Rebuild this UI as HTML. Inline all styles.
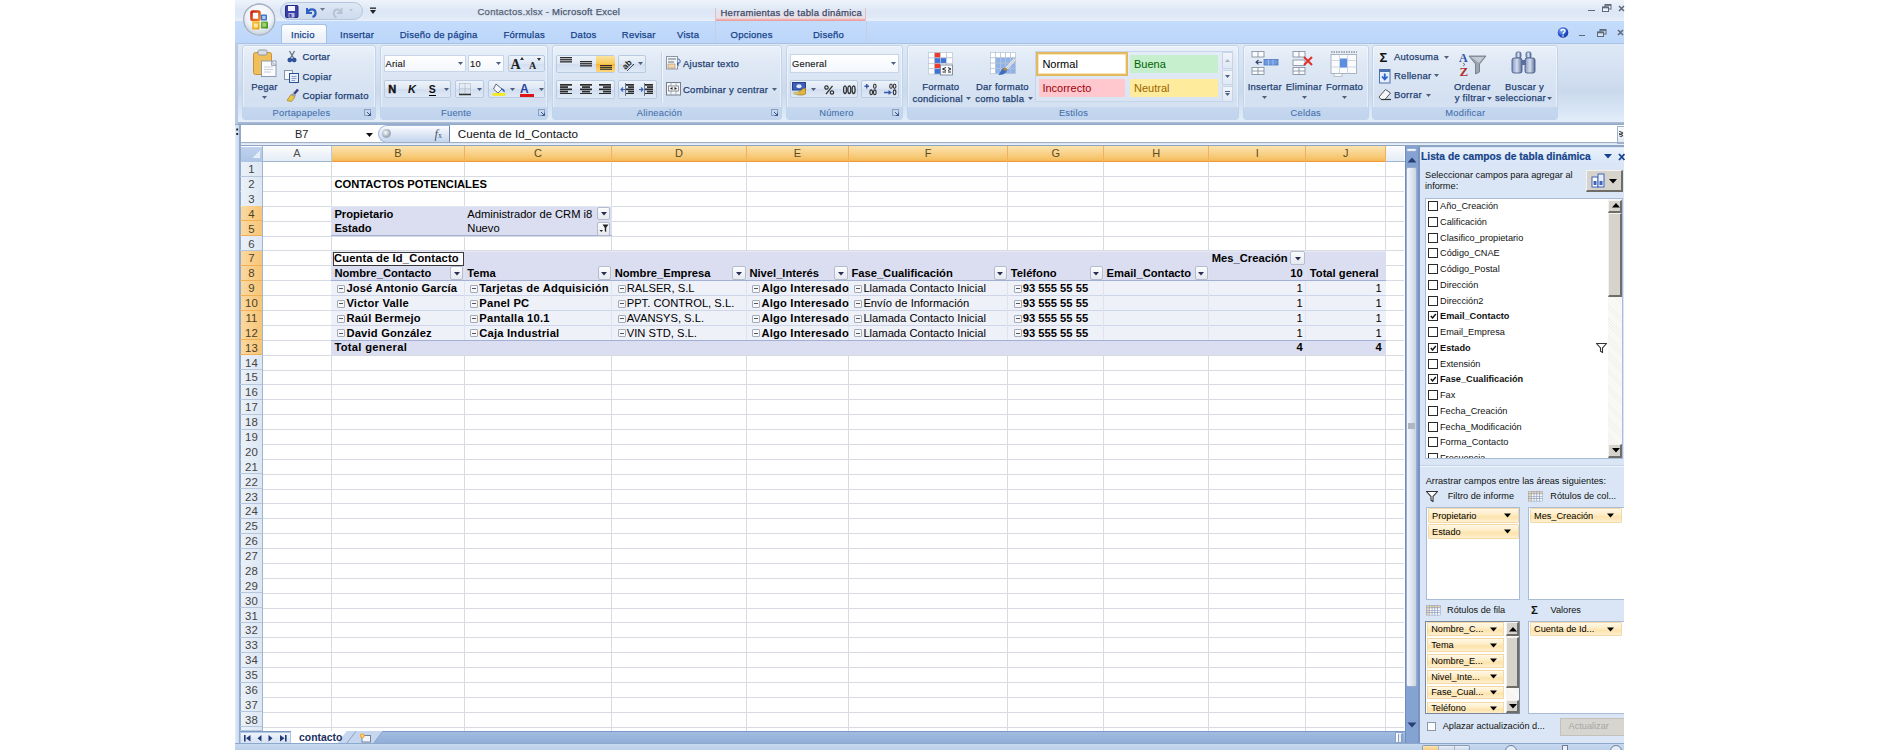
<!DOCTYPE html>
<html><head><meta charset="utf-8"><style>
html,body{margin:0;padding:0;width:1900px;height:750px;overflow:hidden;background:#fff;font-family:"Liberation Sans",sans-serif;}
#root{position:relative;width:1900px;height:750px;overflow:hidden;}
</style></head><body><div id="root">
<div style="position:absolute;left:235px;top:0px;width:1389px;height:750px;background:#c5d7ee"></div>
<div style="position:absolute;left:235px;top:0px;width:1389px;height:21px;background:linear-gradient(#eef3fb 0%,#e8eff9 20%,#dde7f6 50%,#dfe8f6 78%,#e9f0fb 100%)"></div>
<div style="position:absolute;left:280px;top:2px;width:83px;height:18px;background:linear-gradient(#dfe8f5,#cddbee);border:1px solid #b6c7de;border-radius:9px;box-sizing:border-box"></div>
<svg style="position:absolute;left:285px;top:5px;" width="14" height="13" viewBox="0 0 14 13"><rect x="0.5" y="0.5" width="12.5" height="12" rx="1" fill="#3b3fa8" stroke="#272b80"/><rect x="3" y="1" width="7" height="5" fill="#f4f6fc"/><rect x="3.5" y="8" width="6" height="4.5" fill="#b8bde0"/><rect x="4.5" y="9" width="2" height="3" fill="#3b3fa8"/></svg>
<svg style="position:absolute;left:304px;top:4px;" width="14" height="14" viewBox="0 0 14 14"><path d="M3 4 L3 9 L8 9" fill="none" stroke="#2f5fc0" stroke-width="2"/><path d="M3.5 8.5 C5 4.5, 11 4, 11.5 8.5 C11.8 11, 10 12.5, 8.5 13" fill="none" stroke="#2f5fc0" stroke-width="2.2"/></svg>
<svg style="position:absolute;left:320px;top:8px;" width="6" height="4" viewBox="0 0 6 4"><path d="M0 0 L5 0 L2.5 3 Z" fill="#6c7a8e"/></svg>
<svg style="position:absolute;left:332px;top:5px;" width="13" height="13" viewBox="0 0 13 13"><path d="M9.5 3 L9.5 8 L5 8" fill="none" stroke="#b7c2d2" stroke-width="1.8"/><path d="M9 7.5 C7.5 3.5, 2 3.5, 1.8 8 C1.6 10.5, 3 12, 4.5 12.5" fill="none" stroke="#b7c2d2" stroke-width="2"/></svg>
<svg style="position:absolute;left:349px;top:9px;" width="5" height="3" viewBox="0 0 5 3"><path d="M0 0 L4 0 L2 2.5 Z" fill="#b7c2d2"/></svg>
<svg style="position:absolute;left:369px;top:7px;" width="8" height="8" viewBox="0 0 8 8"><rect x="1" y="0.5" width="6" height="1.3" fill="#222"/><path d="M1 3 L7 3 L4 7 Z" fill="#222"/></svg>
<div style="position:absolute;top:7.46px;font-size:9.5px;line-height:9.5px;color:#5a6474;font-weight:normal;white-space:nowrap;letter-spacing:0.25px;-webkit-text-stroke:0.25px #5a6474;left:477.5px;">Contactos.xlsx - <span style="color:#3e4e66">Microsoft Excel</span></div>
<div style="position:absolute;left:715px;top:8px;width:151px;height:13.5px;background:linear-gradient(rgba(255,255,255,0) 0%,rgba(248,214,214,0.5) 70%,#f1a4a4 86%,#e88585 100%);border-left:1px solid #d9c2c8;border-right:1px solid #d9c2c8;box-sizing:border-box"></div>
<div style="position:absolute;top:7.76px;font-size:9.5px;line-height:9.5px;color:#3b4a66;font-weight:normal;white-space:nowrap;letter-spacing:0.25px;-webkit-text-stroke:0.25px #3b4a66;left:720.5px;">Herramientas de tabla dinámica</div>
<div style="position:absolute;left:1588px;top:9.5px;width:7px;height:1.5px;background:#5d6878"></div>
<svg style="position:absolute;left:1602px;top:4px;" width="10" height="8" viewBox="0 0 10 8"><rect x="3" y="0.5" width="6" height="4.5" fill="none" stroke="#5d6878" stroke-width="1"/><path d="M3 1 H9" stroke="#5d6878" stroke-width="1.6"/><rect x="0.5" y="3" width="6" height="4.5" fill="#eef3fb" stroke="#5d6878" stroke-width="1"/><path d="M0.5 3.5 H6.5" stroke="#5d6878" stroke-width="1.6"/></svg>
<svg style="position:absolute;left:1617.5px;top:4.5px;" width="7" height="7" viewBox="0 0 7 7"><path d="M1 1 L6 6 M6 1 L1 6" stroke="#5d6878" stroke-width="1.5"/></svg>
<div style="position:absolute;left:235px;top:21px;width:1389px;height:22px;background:linear-gradient(#c4dcfb,#bcd6fa)"></div>
<div style="position:absolute;left:715px;top:21px;width:1px;height:22px;background:#c6cfe0"></div>
<div style="position:absolute;left:865.5px;top:21px;width:1px;height:22px;background:#c6cfe0"></div>
<div style="position:absolute;left:281px;top:24px;width:46px;height:20px;background:linear-gradient(#ffffff,#f0f5fb 50%,#e8eff9);border:1px solid #a5c0e3;border-bottom:none;border-radius:3px 3px 0 0;box-sizing:border-box"></div>
<div style="position:absolute;top:29.66px;font-size:9.5px;line-height:9.5px;color:#15428b;font-weight:normal;white-space:nowrap;letter-spacing:0.25px;-webkit-text-stroke:0.25px #15428b;left:291px;">Inicio</div>
<div style="position:absolute;top:29.66px;font-size:9.5px;line-height:9.5px;color:#15428b;font-weight:normal;white-space:nowrap;letter-spacing:0.25px;-webkit-text-stroke:0.25px #15428b;left:340px;">Insertar</div>
<div style="position:absolute;top:29.66px;font-size:9.5px;line-height:9.5px;color:#15428b;font-weight:normal;white-space:nowrap;letter-spacing:0.25px;-webkit-text-stroke:0.25px #15428b;left:399.7px;">Diseño de página</div>
<div style="position:absolute;top:29.66px;font-size:9.5px;line-height:9.5px;color:#15428b;font-weight:normal;white-space:nowrap;letter-spacing:0.25px;-webkit-text-stroke:0.25px #15428b;left:503.4px;">Fórmulas</div>
<div style="position:absolute;top:29.66px;font-size:9.5px;line-height:9.5px;color:#15428b;font-weight:normal;white-space:nowrap;letter-spacing:0.25px;-webkit-text-stroke:0.25px #15428b;left:570.5px;">Datos</div>
<div style="position:absolute;top:29.66px;font-size:9.5px;line-height:9.5px;color:#15428b;font-weight:normal;white-space:nowrap;letter-spacing:0.25px;-webkit-text-stroke:0.25px #15428b;left:621.8px;">Revisar</div>
<div style="position:absolute;top:29.66px;font-size:9.5px;line-height:9.5px;color:#15428b;font-weight:normal;white-space:nowrap;letter-spacing:0.25px;-webkit-text-stroke:0.25px #15428b;left:677px;">Vista</div>
<div style="position:absolute;top:29.66px;font-size:9.5px;line-height:9.5px;color:#15428b;font-weight:normal;white-space:nowrap;letter-spacing:0.25px;-webkit-text-stroke:0.25px #15428b;left:730.5px;">Opciones</div>
<div style="position:absolute;top:29.66px;font-size:9.5px;line-height:9.5px;color:#15428b;font-weight:normal;white-space:nowrap;letter-spacing:0.25px;-webkit-text-stroke:0.25px #15428b;left:813px;">Diseño</div>
<svg style="position:absolute;left:1556px;top:26px" width="14" height="14" viewBox="0 0 14 14">
<defs><radialGradient id="hg" cx="40%" cy="35%" r="70%"><stop offset="0" stop-color="#8fb8f8"/><stop offset="0.6" stop-color="#2050c8"/><stop offset="1" stop-color="#10309a"/></radialGradient></defs>
<circle cx="7" cy="6.5" r="5.8" fill="url(#hg)" stroke="#e6eefc" stroke-width="0.8"/>
<path d="M5 5 C5 3, 9 3, 9 5 C9 6.5, 7 6.5, 7 8.2" fill="none" stroke="#fff" stroke-width="1.4"/><circle cx="7" cy="10" r="0.8" fill="#fff"/></svg>
<div style="position:absolute;left:1578.5px;top:34.5px;width:6.5px;height:1.5px;background:#5d6878"></div>
<svg style="position:absolute;left:1596.5px;top:28.5px;" width="10" height="8" viewBox="0 0 10 8"><rect x="3" y="0.5" width="6" height="4.5" fill="none" stroke="#5d6878" stroke-width="1"/><path d="M3 1 H9" stroke="#5d6878" stroke-width="1.6"/><rect x="0.5" y="3" width="6" height="4.5" fill="#d5e4f8" stroke="#5d6878" stroke-width="1"/><path d="M0.5 3.5 H6.5" stroke="#5d6878" stroke-width="1.6"/></svg>
<svg style="position:absolute;left:1617px;top:29px;" width="7" height="7" viewBox="0 0 7 7"><path d="M1 1 L6 6 M6 1 L1 6" stroke="#5d6878" stroke-width="1.5"/></svg>
<svg style="position:absolute;left:241px;top:2px" width="37" height="37" viewBox="0 0 37 37">
<defs><radialGradient id="ob" cx="50%" cy="35%" r="65%"><stop offset="0" stop-color="#ffffff"/><stop offset="0.65" stop-color="#eef2f8"/><stop offset="1" stop-color="#c3cfdd"/></radialGradient>
<linearGradient id="rq" x1="0" y1="0" x2="1" y2="1"><stop offset="0" stop-color="#c81e14"/><stop offset="1" stop-color="#f2861c"/></linearGradient>
<linearGradient id="yq" x1="0" y1="0" x2="1" y2="1"><stop offset="0" stop-color="#f7c73a"/><stop offset="1" stop-color="#ee9a12"/></linearGradient>
<linearGradient id="gq" x1="0" y1="0" x2="1" y2="1"><stop offset="0" stop-color="#7cc046"/><stop offset="1" stop-color="#3f8a1e"/></linearGradient></defs>
<circle cx="18.2" cy="17.6" r="16.6" fill="#dfe8f4" opacity="0.6"/>
<circle cx="18.2" cy="17.6" r="15.6" fill="url(#ob)" stroke="#a3afbf" stroke-width="1.3"/>
<rect x="10.5" y="9.5" width="8" height="8.5" rx="1.2" fill="none" stroke="url(#rq)" stroke-width="2.6"/>
<rect x="19.8" y="12.5" width="6.2" height="6" rx="0.8" fill="#3a72cc"/>
<rect x="21.2" y="13.9" width="3.4" height="3.2" fill="#a9cdf5"/>
<rect x="11" y="19.5" width="7.5" height="8" rx="0.8" fill="url(#yq)"/>
<rect x="12.8" y="21.5" width="4" height="4" fill="#fbe7a6"/>
<rect x="19.8" y="19.5" width="7.2" height="7" rx="0.8" fill="url(#gq)"/>
<rect x="21.5" y="21.2" width="3.8" height="3.6" fill="#bfe39b" opacity="0.7"/>
</svg>
<div style="position:absolute;left:235px;top:43px;width:1389px;height:81px;background:linear-gradient(#dfe9f6 0%,#d6e2f3 30%,#cbd9ed 60%,#d9e6f6 85%,#e7f0fb 100%)"></div>
<div style="position:absolute;left:235px;top:43px;width:1389px;height:1px;background:#a9c2e4"></div>
<div style="position:absolute;left:235px;top:121.5px;width:1389px;height:3px;background:linear-gradient(#aebfd6,#8ea6c6)"></div>
<div style="position:absolute;left:235px;top:43px;width:3px;height:81px;background:#b9cbe3"></div>
<div style="position:absolute;left:241.8px;top:45px;width:134.2px;height:74.5px;border-radius:3px;border:1px solid #c2d4ea;box-sizing:border-box;background:linear-gradient(#eaf1fa 0%,#e0e9f5 20%,#d3e0f1 75%,#d9e5f4 100%);box-shadow:inset 0 0 0 1px rgba(255,255,255,0.45)"></div>
<div style="position:absolute;left:242.8px;top:106.5px;width:132.2px;height:12px;background:linear-gradient(#c6d8ef,#c0d4ee);border-radius:0 0 2px 2px"></div>
<div style="position:absolute;top:109.02px;font-size:9.31px;line-height:9.31px;color:#4571ad;font-weight:normal;white-space:nowrap;letter-spacing:0.25px;-webkit-text-stroke:0.1px #4571ad;left:101.5px;width:400px;text-align:center;">Portapapeles</div>
<svg style="position:absolute;left:364px;top:109px;" width="8" height="8" viewBox="0 0 8 8"><rect x="0.5" y="0.5" width="6" height="6" fill="none" stroke="#7d94b6" stroke-width="0.8"/><path d="M3 3 L6.5 6.5 M6.5 3.8 L6.5 6.5 L3.8 6.5" stroke="#3d5a8a" stroke-width="1" fill="none"/></svg>
<svg style="position:absolute;left:252px;top:49px;" width="26" height="29" viewBox="0 0 26 29">
<rect x="1.5" y="3.5" width="18" height="22" rx="2" fill="#f0bf5a" stroke="#c8913a"/>
<rect x="6" y="1" width="9" height="5" rx="1.5" fill="#d9dde4" stroke="#8c96a6"/>
<rect x="9.5" y="12" width="14.5" height="15.5" fill="#fbfcfe" stroke="#8f9bb0"/>
<path d="M19.5 12 L24 16.5 L19.5 16.5 Z" fill="#d5dbe6" stroke="#8f9bb0" stroke-width="0.8"/>
<path d="M12 18 H21 M12 20.5 H21 M12 23 H19" stroke="#c2c9d6" stroke-width="0.9"/></svg>
<div style="position:absolute;top:81.76px;font-size:9.5px;line-height:9.5px;color:#233f72;font-weight:normal;white-space:nowrap;letter-spacing:0.25px;-webkit-text-stroke:0.25px #233f72;left:64.5px;width:400px;text-align:center;">Pegar</div>
<svg style="position:absolute;left:262px;top:95.5px;" width="5" height="3" viewBox="0 0 5 3"><path d="M0 0 L5 0 L2.5 3 Z" fill="#4d5f7c"/></svg>
<svg style="position:absolute;left:286px;top:50px;" width="12" height="13" viewBox="0 0 12 13"><path d="M3.5 1 L7.5 8 M8.5 1 L4.5 8" stroke="#6d7684" stroke-width="1.3"/><circle cx="3.8" cy="10" r="1.9" fill="#2c58b0" stroke="#17367a" stroke-width="0.8"/><circle cx="8.2" cy="10" r="1.9" fill="#2c58b0" stroke="#17367a" stroke-width="0.8"/></svg>
<div style="position:absolute;top:52.36px;font-size:9.5px;line-height:9.5px;color:#233f72;font-weight:normal;white-space:nowrap;letter-spacing:0.25px;-webkit-text-stroke:0.25px #233f72;left:302.4px;">Cortar</div>
<svg style="position:absolute;left:284px;top:70px;" width="16" height="13" viewBox="0 0 16 13"><rect x="0.5" y="0.5" width="8" height="9" fill="#f7f9fd" stroke="#8593ab"/><rect x="5.5" y="3.5" width="9" height="9" fill="#e9eef8" stroke="#2c4f9a"/><path d="M7.5 6.5 H12.5 M7.5 8.5 H12.5 M7.5 10.5 H11" stroke="#6d86c0" stroke-width="0.8"/></svg>
<div style="position:absolute;top:72.16px;font-size:9.5px;line-height:9.5px;color:#233f72;font-weight:normal;white-space:nowrap;letter-spacing:0.25px;-webkit-text-stroke:0.25px #233f72;left:302.4px;">Copiar</div>
<svg style="position:absolute;left:285px;top:88px;" width="15" height="14" viewBox="0 0 15 14"><path d="M9 6 L13 1.5" stroke="#3b3f7a" stroke-width="2.5"/><path d="M2 12.5 L6 6.5 L10 9 L6.5 13.5 Z" fill="#e8c64a" stroke="#a8892a" stroke-width="0.8"/><path d="M6 6.5 L8.5 4.8 L11 7 L10 9 Z" fill="#9aa0b0"/></svg>
<div style="position:absolute;top:90.96px;font-size:9.5px;line-height:9.5px;color:#233f72;font-weight:normal;white-space:nowrap;letter-spacing:0.25px;-webkit-text-stroke:0.25px #233f72;left:302.4px;">Copiar formato</div>
<div style="position:absolute;left:379.5px;top:45px;width:168.9px;height:74.5px;border-radius:3px;border:1px solid #c2d4ea;box-sizing:border-box;background:linear-gradient(#eaf1fa 0%,#e0e9f5 20%,#d3e0f1 75%,#d9e5f4 100%);box-shadow:inset 0 0 0 1px rgba(255,255,255,0.45)"></div>
<div style="position:absolute;left:380.5px;top:106.5px;width:166.9px;height:12px;background:linear-gradient(#c6d8ef,#c0d4ee);border-radius:0 0 2px 2px"></div>
<div style="position:absolute;top:109.02px;font-size:9.31px;line-height:9.31px;color:#4571ad;font-weight:normal;white-space:nowrap;letter-spacing:0.25px;-webkit-text-stroke:0.1px #4571ad;left:256.3px;width:400px;text-align:center;">Fuente</div>
<svg style="position:absolute;left:538px;top:109px;" width="8" height="8" viewBox="0 0 8 8"><rect x="0.5" y="0.5" width="6" height="6" fill="none" stroke="#7d94b6" stroke-width="0.8"/><path d="M3 3 L6.5 6.5 M6.5 3.8 L6.5 6.5 L3.8 6.5" stroke="#3d5a8a" stroke-width="1" fill="none"/></svg>
<div style="position:absolute;left:383.5px;top:54.7px;width:82.5px;height:17.8px;background:linear-gradient(#ffffff,#f3f7fc);border:1px solid #c6d5e8;box-sizing:border-box"></div>
<div style="position:absolute;top:59.52px;font-size:9.31px;line-height:9.31px;color:#1a1a1a;font-weight:normal;white-space:nowrap;letter-spacing:0.25px;-webkit-text-stroke:0.15px #1a1a1a;left:385.5px;">Arial</div>
<svg style="position:absolute;left:458px;top:62px;" width="5" height="3" viewBox="0 0 5 3"><path d="M0 0 L5 0 L2.5 3 Z" fill="#4d5f7c"/></svg>
<div style="position:absolute;left:467.5px;top:54.7px;width:36.5px;height:17.8px;background:linear-gradient(#ffffff,#f3f7fc);border:1px solid #c6d5e8;box-sizing:border-box"></div>
<div style="position:absolute;top:59.52px;font-size:9.31px;line-height:9.31px;color:#1a1a1a;font-weight:normal;white-space:nowrap;letter-spacing:0.25px;-webkit-text-stroke:0.15px #1a1a1a;left:470px;">10</div>
<svg style="position:absolute;left:496px;top:62px;" width="5" height="3" viewBox="0 0 5 3"><path d="M0 0 L5 0 L2.5 3 Z" fill="#4d5f7c"/></svg>
<div style="position:absolute;left:507.6px;top:54.7px;width:37.4px;height:17.8px;border:1px solid #b9cbe3;border-radius:2px;box-sizing:border-box;background:linear-gradient(#eef3fa,#dde7f4 50%,#d2def0 51%,#dfe9f6);"></div>
<div style="position:absolute;top:57.65px;font-size:14px;line-height:14px;color:#222;font-weight:bold;white-space:nowrap;font-family:'Liberation Serif',serif;left:510.5px;">A</div>
<svg style="position:absolute;left:520px;top:56.5px;" width="4" height="3" viewBox="0 0 4 3"><path d="M0 3 L4 3 L2 0 Z" fill="#333"/></svg>
<div style="position:absolute;top:60.53px;font-size:10px;line-height:10px;color:#222;font-weight:bold;white-space:nowrap;font-family:'Liberation Serif',serif;left:529px;">A</div>
<svg style="position:absolute;left:537px;top:57.5px;" width="4" height="3" viewBox="0 0 4 3"><path d="M0 0 L4 0 L2 3 Z" fill="#333"/></svg>
<div style="position:absolute;left:383.5px;top:79.7px;width:67.5px;height:18.7px;border:1px solid #b9cbe3;border-radius:2px;box-sizing:border-box;background:linear-gradient(#eef3fa,#dde7f4 50%,#d2def0 51%,#dfe9f6);"></div>
<div style="position:absolute;top:83.99px;font-size:11px;line-height:11px;color:#111;font-weight:bold;white-space:nowrap;-webkit-text-stroke:0.4px #111;left:388.3px;">N</div>
<div style="position:absolute;top:83.99px;font-size:11px;line-height:11px;color:#111;font-weight:bold;white-space:nowrap;font-style:italic;left:408px;">K</div>
<div style="position:absolute;top:84.11px;font-size:10.5px;line-height:10.5px;color:#111;font-weight:bold;white-space:nowrap;left:428.8px;">S</div>
<div style="position:absolute;left:428.5px;top:95px;width:7.5px;height:1px;background:#000"></div>
<svg style="position:absolute;left:444px;top:87.5px;" width="5" height="3" viewBox="0 0 5 3"><path d="M0 0 L5 0 L2.5 3 Z" fill="#4d5f7c"/></svg>
<div style="position:absolute;left:455px;top:79.7px;width:29.4px;height:18.7px;border:1px solid #b9cbe3;border-radius:2px;box-sizing:border-box;background:linear-gradient(#eef3fa,#dde7f4 50%,#d2def0 51%,#dfe9f6);"></div>
<svg style="position:absolute;left:459px;top:83px;" width="13" height="13" viewBox="0 0 13 13"><rect x="0.5" y="0.5" width="11" height="10.5" fill="none" stroke="#a3acb8" stroke-dasharray="1 1"/><path d="M6 0.5 V11 M0.5 5.75 H11.5" stroke="#a3acb8" stroke-dasharray="1 1"/><path d="M0 11.5 H12" stroke="#333" stroke-width="1.5"/></svg>
<svg style="position:absolute;left:477px;top:87.5px;" width="5" height="3" viewBox="0 0 5 3"><path d="M0 0 L5 0 L2.5 3 Z" fill="#4d5f7c"/></svg>
<div style="position:absolute;left:488.4px;top:79.7px;width:56.6px;height:18.7px;border:1px solid #b9cbe3;border-radius:2px;box-sizing:border-box;background:linear-gradient(#eef3fa,#dde7f4 50%,#d2def0 51%,#dfe9f6);"></div>
<svg style="position:absolute;left:491.5px;top:82px;" width="15" height="14" viewBox="0 0 15 14"><path d="M4 2 L10 7 L6 11 L1.5 7 Z" fill="#f4f6fa" stroke="#555d6a" stroke-width="0.9"/><path d="M9 7 C11 7, 12.5 9, 12 10" stroke="#3460b8" stroke-width="1.5" fill="none"/><rect x="0.5" y="11" width="13" height="2.8" fill="#f3ea1d"/></svg>
<svg style="position:absolute;left:510px;top:87.5px;" width="5" height="3" viewBox="0 0 5 3"><path d="M0 0 L5 0 L2.5 3 Z" fill="#4d5f7c"/></svg>
<div style="position:absolute;top:82.84px;font-size:12px;line-height:12px;color:#2a3f9e;font-weight:bold;white-space:nowrap;left:520px;">A</div>
<div style="position:absolute;left:519.5px;top:93.5px;width:14px;height:3px;background:#e01414"></div>
<svg style="position:absolute;left:538.5px;top:87.5px;" width="5" height="3" viewBox="0 0 5 3"><path d="M0 0 L5 0 L2.5 3 Z" fill="#4d5f7c"/></svg>
<div style="position:absolute;left:552.2px;top:45px;width:230.3px;height:74.5px;border-radius:3px;border:1px solid #c2d4ea;box-sizing:border-box;background:linear-gradient(#eaf1fa 0%,#e0e9f5 20%,#d3e0f1 75%,#d9e5f4 100%);box-shadow:inset 0 0 0 1px rgba(255,255,255,0.45)"></div>
<div style="position:absolute;left:553.2px;top:106.5px;width:228.3px;height:12px;background:linear-gradient(#c6d8ef,#c0d4ee);border-radius:0 0 2px 2px"></div>
<div style="position:absolute;top:109.02px;font-size:9.31px;line-height:9.31px;color:#4571ad;font-weight:normal;white-space:nowrap;letter-spacing:0.25px;-webkit-text-stroke:0.1px #4571ad;left:459.5px;width:400px;text-align:center;">Alineación</div>
<svg style="position:absolute;left:771px;top:109px;" width="8" height="8" viewBox="0 0 8 8"><rect x="0.5" y="0.5" width="6" height="6" fill="none" stroke="#7d94b6" stroke-width="0.8"/><path d="M3 3 L6.5 6.5 M6.5 3.8 L6.5 6.5 L3.8 6.5" stroke="#3d5a8a" stroke-width="1" fill="none"/></svg>
<div style="position:absolute;left:555.5px;top:54.5px;width:59.9px;height:18.4px;border:1px solid #b9cbe3;border-radius:2px;box-sizing:border-box;background:linear-gradient(#eef3fa,#dde7f4 50%,#d2def0 51%,#dfe9f6);"></div>
<div style="position:absolute;left:596px;top:55.5px;width:18.5px;height:16.5px;background:linear-gradient(#fbe39e,#f9c958 50%,#f7b536 51%,#fbd97e);border-radius:1px"></div>
<svg style="position:absolute;left:559.5px;top:57px;" width="12" height="5.5" viewBox="0 0 12 5.5"><rect x="0.0" y="0.0" width="12" height="1.3" fill="#2b2b2b"/><rect x="0.0" y="2.1" width="12" height="1.3" fill="#2b2b2b"/><rect x="0.0" y="4.2" width="12" height="1.3" fill="#2b2b2b"/></svg>
<svg style="position:absolute;left:579.5px;top:61px;" width="12" height="5.5" viewBox="0 0 12 5.5"><rect x="0.0" y="0.0" width="12" height="1.3" fill="#2b2b2b"/><rect x="0.0" y="2.1" width="12" height="1.3" fill="#2b2b2b"/><rect x="0.0" y="4.2" width="12" height="1.3" fill="#2b2b2b"/></svg>
<svg style="position:absolute;left:599.5px;top:64.5px;" width="12" height="5.5" viewBox="0 0 12 5.5"><rect x="0.0" y="0.0" width="12" height="1.3" fill="#2b2b2b"/><rect x="0.0" y="2.1" width="12" height="1.3" fill="#2b2b2b"/><rect x="0.0" y="4.2" width="12" height="1.3" fill="#2b2b2b"/></svg>
<div style="position:absolute;left:618px;top:54.5px;width:27.7px;height:18.4px;border:1px solid #b9cbe3;border-radius:2px;box-sizing:border-box;background:linear-gradient(#eef3fa,#dde7f4 50%,#d2def0 51%,#dfe9f6);"></div>
<svg style="position:absolute;left:621px;top:56.5px;" width="17" height="15" viewBox="0 0 17 15"><text x="0" y="0" transform="translate(4.5 13) rotate(-45)" font-family="Liberation Sans" font-weight="bold" font-size="8.5" fill="#222">ab</text><path d="M6 14 L13 7" stroke="#333" stroke-width="0.9"/><path d="M13 7 L11.5 7.3 L12.7 8.5 Z" fill="#333"/></svg>
<svg style="position:absolute;left:638px;top:61.5px;" width="5" height="3" viewBox="0 0 5 3"><path d="M0 0 L5 0 L2.5 3 Z" fill="#4d5f7c"/></svg>
<div style="position:absolute;left:555.5px;top:79.5px;width:59.9px;height:19px;border:1px solid #b9cbe3;border-radius:2px;box-sizing:border-box;background:linear-gradient(#eef3fa,#dde7f4 50%,#d2def0 51%,#dfe9f6);"></div>
<svg style="position:absolute;left:560px;top:83.8px;" width="12" height="10.7" viewBox="0 0 12 10.7"><rect x="0" y="0.0" width="12" height="1.7" fill="#2b2b2b"/><rect x="0" y="2.25" width="8" height="1.7" fill="#2b2b2b"/><rect x="0" y="4.5" width="12" height="1.7" fill="#2b2b2b"/><rect x="0" y="6.75" width="8" height="1.7" fill="#2b2b2b"/><rect x="0" y="9.0" width="12" height="1.7" fill="#2b2b2b"/></svg>
<svg style="position:absolute;left:579.5px;top:83.8px;" width="12" height="10.7" viewBox="0 0 12 10.7"><rect x="0.0" y="0.0" width="12" height="1.7" fill="#2b2b2b"/><rect x="2.0" y="2.25" width="8" height="1.7" fill="#2b2b2b"/><rect x="0.0" y="4.5" width="12" height="1.7" fill="#2b2b2b"/><rect x="2.0" y="6.75" width="8" height="1.7" fill="#2b2b2b"/><rect x="0.0" y="9.0" width="12" height="1.7" fill="#2b2b2b"/></svg>
<svg style="position:absolute;left:599px;top:83.8px;" width="12" height="10.7" viewBox="0 0 12 10.7"><rect x="0" y="0.0" width="12" height="1.7" fill="#2b2b2b"/><rect x="4" y="2.25" width="8" height="1.7" fill="#2b2b2b"/><rect x="0" y="4.5" width="12" height="1.7" fill="#2b2b2b"/><rect x="4" y="6.75" width="8" height="1.7" fill="#2b2b2b"/><rect x="0" y="9.0" width="12" height="1.7" fill="#2b2b2b"/></svg>
<div style="position:absolute;left:618px;top:79.5px;width:39px;height:19px;border:1px solid #b9cbe3;border-radius:2px;box-sizing:border-box;background:linear-gradient(#eef3fa,#dde7f4 50%,#d2def0 51%,#dfe9f6);"></div>
<svg style="position:absolute;left:626px;top:83.8px;" width="8" height="10.7" viewBox="0 0 8 10.7"><rect x="0" y="0.0" width="8" height="1.7" fill="#2b2b2b"/><rect x="2" y="2.25" width="6" height="1.7" fill="#2b2b2b"/><rect x="0" y="4.5" width="8" height="1.7" fill="#2b2b2b"/><rect x="2" y="6.75" width="6" height="1.7" fill="#2b2b2b"/><rect x="0" y="9.0" width="8" height="1.7" fill="#2b2b2b"/></svg>
<div style="position:absolute;left:625px;top:83px;width:0.8px;height:13px;background:#6d7a90"></div>
<svg style="position:absolute;left:619.5px;top:87px;" width="5" height="5" viewBox="0 0 5 5"><path d="M5 2.5 H1 M3 0.5 L1 2.5 L3 4.5" stroke="#3a62b8" stroke-width="1.1" fill="none"/></svg>
<svg style="position:absolute;left:645px;top:83.8px;" width="8" height="10.7" viewBox="0 0 8 10.7"><rect x="0" y="0.0" width="8" height="1.7" fill="#2b2b2b"/><rect x="2" y="2.25" width="6" height="1.7" fill="#2b2b2b"/><rect x="0" y="4.5" width="8" height="1.7" fill="#2b2b2b"/><rect x="2" y="6.75" width="6" height="1.7" fill="#2b2b2b"/><rect x="0" y="9.0" width="8" height="1.7" fill="#2b2b2b"/></svg>
<div style="position:absolute;left:644px;top:83px;width:0.8px;height:13px;background:#6d7a90"></div>
<svg style="position:absolute;left:638.5px;top:87px;" width="5" height="5" viewBox="0 0 5 5"><path d="M0 2.5 H4 M2 0.5 L4 2.5 L2 4.5" stroke="#3a62b8" stroke-width="1.1" fill="none"/></svg>
<div style="position:absolute;left:660.5px;top:52px;width:1px;height:51px;background:#c4d3e7"></div>
<div style="position:absolute;left:661.5px;top:52px;width:1px;height:51px;background:#f3f7fc"></div>
<svg style="position:absolute;left:665.5px;top:56px;" width="16" height="14" viewBox="0 0 16 14"><rect x="0.5" y="0.5" width="11" height="12.5" fill="#f4f6fa" stroke="#8b95a5"/><path d="M2 3 H10 M2 6 H8" stroke="#66707e" stroke-width="1"/><rect x="2" y="8" width="7" height="4" fill="#f0d8b0" stroke="#b4875a" stroke-width="0.6"/><path d="M12 3 C15 3, 15 8, 11 8 L13 6.5 M11 8 L13 9.5" stroke="#2a58b0" stroke-width="1" fill="none"/></svg>
<div style="position:absolute;top:58.96px;font-size:9.5px;line-height:9.5px;color:#233f72;font-weight:normal;white-space:nowrap;letter-spacing:0.25px;-webkit-text-stroke:0.25px #233f72;left:683px;">Ajustar texto</div>
<svg style="position:absolute;left:665.5px;top:82px;" width="16" height="14" viewBox="0 0 16 14"><rect x="0.5" y="0.5" width="14" height="12.5" fill="#f4f6fa" stroke="#747e8e"/><path d="M5 0.5 V13 M10 0.5 V13" stroke="#9aa3b2" stroke-width="0.8"/><rect x="2.5" y="4" width="10" height="5" fill="#f0f3f8" stroke="#555" stroke-width="0.6"/><path d="M4 6.5 L6.5 5 V8 Z M11 6.5 L8.5 5 V8 Z" fill="#222"/></svg>
<div style="position:absolute;top:84.56px;font-size:9.5px;line-height:9.5px;color:#233f72;font-weight:normal;white-space:nowrap;letter-spacing:0.25px;-webkit-text-stroke:0.25px #233f72;left:683px;">Combinar y centrar</div>
<svg style="position:absolute;left:772px;top:87.5px;" width="5" height="3" viewBox="0 0 5 3"><path d="M0 0 L5 0 L2.5 3 Z" fill="#4d5f7c"/></svg>
<div style="position:absolute;left:786.2px;top:45px;width:117px;height:74.5px;border-radius:3px;border:1px solid #c2d4ea;box-sizing:border-box;background:linear-gradient(#eaf1fa 0%,#e0e9f5 20%,#d3e0f1 75%,#d9e5f4 100%);box-shadow:inset 0 0 0 1px rgba(255,255,255,0.45)"></div>
<div style="position:absolute;left:787.2px;top:106.5px;width:115px;height:12px;background:linear-gradient(#c6d8ef,#c0d4ee);border-radius:0 0 2px 2px"></div>
<div style="position:absolute;top:109.02px;font-size:9.31px;line-height:9.31px;color:#4571ad;font-weight:normal;white-space:nowrap;letter-spacing:0.25px;-webkit-text-stroke:0.1px #4571ad;left:636.5px;width:400px;text-align:center;">Número</div>
<svg style="position:absolute;left:892px;top:109px;" width="8" height="8" viewBox="0 0 8 8"><rect x="0.5" y="0.5" width="6" height="6" fill="none" stroke="#7d94b6" stroke-width="0.8"/><path d="M3 3 L6.5 6.5 M6.5 3.8 L6.5 6.5 L3.8 6.5" stroke="#3d5a8a" stroke-width="1" fill="none"/></svg>
<div style="position:absolute;left:790.3px;top:54.4px;width:108.7px;height:18.4px;background:linear-gradient(#ffffff,#f3f7fc);border:1px solid #c6d5e8;box-sizing:border-box"></div>
<div style="position:absolute;top:59.72px;font-size:9.31px;line-height:9.31px;color:#1a1a1a;font-weight:normal;white-space:nowrap;letter-spacing:0.25px;-webkit-text-stroke:0.15px #1a1a1a;left:792px;">General</div>
<svg style="position:absolute;left:891px;top:62px;" width="5" height="3" viewBox="0 0 5 3"><path d="M0 0 L5 0 L2.5 3 Z" fill="#4d5f7c"/></svg>
<div style="position:absolute;left:790.3px;top:79.7px;width:67.7px;height:18.5px;border:1px solid #b9cbe3;border-radius:2px;box-sizing:border-box;background:linear-gradient(#eef3fa,#dde7f4 50%,#d2def0 51%,#dfe9f6);"></div>
<svg style="position:absolute;left:792px;top:82px;" width="15" height="14" viewBox="0 0 15 14"><rect x="0.5" y="0.5" width="13" height="7.5" fill="#3f5fb8" stroke="#24408a"/><ellipse cx="7" cy="4.2" rx="2.6" ry="2" fill="#dfe8f8"/><path d="M13.5 6 L13.5 12 C11 13.5, 6 13.5, 2 11.5 C5 10.5, 9 9.5, 10.5 7 Z" fill="#e2b53f" stroke="#9c7a22" stroke-width="0.7"/><ellipse cx="4" cy="11" rx="3" ry="1.6" fill="#c9c27a"/></svg>
<svg style="position:absolute;left:810.5px;top:87.5px;" width="5" height="3" viewBox="0 0 5 3"><path d="M0 0 L5 0 L2.5 3 Z" fill="#4d5f7c"/></svg>
<svg style="position:absolute;left:823.5px;top:84.5px;" width="11" height="10" viewBox="0 0 11 10"><circle cx="2.5" cy="2.5" r="1.7" fill="none" stroke="#333" stroke-width="1.2"/><circle cx="8" cy="7.5" r="1.7" fill="none" stroke="#333" stroke-width="1.2"/><path d="M8.5 0.8 L2 9.2" stroke="#333" stroke-width="1.3"/></svg>
<svg style="position:absolute;left:842.5px;top:84.5px;" width="13" height="10" viewBox="0 0 13 10"><ellipse cx="2" cy="4.7" rx="1.5" ry="3.8" fill="none" stroke="#333" stroke-width="1.3"/><ellipse cx="6.3" cy="4.7" rx="1.5" ry="3.8" fill="none" stroke="#333" stroke-width="1.3"/><ellipse cx="10.6" cy="4.7" rx="1.5" ry="3.8" fill="none" stroke="#333" stroke-width="1.3"/></svg>
<div style="position:absolute;left:861.4px;top:79.7px;width:37.6px;height:18.5px;border:1px solid #b9cbe3;border-radius:2px;box-sizing:border-box;background:linear-gradient(#eef3fa,#dde7f4 50%,#d2def0 51%,#dfe9f6);"></div>
<svg style="position:absolute;left:864px;top:82.5px;" width="15" height="13" viewBox="0 0 15 13"><path d="M0.5 3.3 H5 M2.75 1 V5.5" stroke="#3a58a8" stroke-width="1.5"/><ellipse cx="10.8" cy="3.2" rx="1.3" ry="2.2" fill="none" stroke="#333" stroke-width="1.1"/><ellipse cx="7.2" cy="9.3" rx="1.3" ry="2.4" fill="none" stroke="#333" stroke-width="1.1"/><ellipse cx="10.8" cy="9.3" rx="1.3" ry="2.4" fill="none" stroke="#333" stroke-width="1.1"/></svg>
<svg style="position:absolute;left:883px;top:82.5px;" width="15" height="13" viewBox="0 0 15 13"><ellipse cx="8" cy="3.2" rx="1.3" ry="2.2" fill="none" stroke="#333" stroke-width="1.1"/><ellipse cx="11.6" cy="3.2" rx="1.3" ry="2.2" fill="none" stroke="#333" stroke-width="1.1"/><ellipse cx="11.6" cy="9.3" rx="1.3" ry="2.4" fill="none" stroke="#333" stroke-width="1.1"/><path d="M1 9.5 H7.5 M5.5 7.8 L7.8 9.5 L5.5 11.2" stroke="#3a58a8" stroke-width="1.3" fill="none"/></svg>
<div style="position:absolute;left:906.6px;top:45px;width:332.4px;height:74.5px;border-radius:3px;border:1px solid #c2d4ea;box-sizing:border-box;background:linear-gradient(#eaf1fa 0%,#e0e9f5 20%,#d3e0f1 75%,#d9e5f4 100%);box-shadow:inset 0 0 0 1px rgba(255,255,255,0.45)"></div>
<div style="position:absolute;left:907.6px;top:106.5px;width:330.4px;height:12px;background:linear-gradient(#c6d8ef,#c0d4ee);border-radius:0 0 2px 2px"></div>
<div style="position:absolute;top:109.02px;font-size:9.31px;line-height:9.31px;color:#4571ad;font-weight:normal;white-space:nowrap;letter-spacing:0.25px;-webkit-text-stroke:0.1px #4571ad;left:873.5px;width:400px;text-align:center;">Estilos</div>
<svg style="position:absolute;left:927.5px;top:51.5px;" width="26" height="24" viewBox="0 0 26 24"><rect x="0.5" y="0.5" width="6" height="5.4" fill="#ffffff" stroke="#b8c4d6" stroke-width="0.7"/><rect x="6.5" y="0.5" width="6" height="5.4" fill="#ee3b2e" stroke="#b8c4d6" stroke-width="0.7"/><rect x="12.5" y="0.5" width="6" height="5.4" fill="#ffffff" stroke="#b8c4d6" stroke-width="0.7"/><rect x="18.5" y="0.5" width="6" height="5.4" fill="#ffffff" stroke="#b8c4d6" stroke-width="0.7"/><rect x="0.5" y="5.9" width="6" height="5.4" fill="#ffffff" stroke="#b8c4d6" stroke-width="0.7"/><rect x="6.5" y="5.9" width="6" height="5.4" fill="#3f74d6" stroke="#b8c4d6" stroke-width="0.7"/><rect x="12.5" y="5.9" width="6" height="5.4" fill="#3f74d6" stroke="#b8c4d6" stroke-width="0.7"/><rect x="18.5" y="5.9" width="6" height="5.4" fill="#ffffff" stroke="#b8c4d6" stroke-width="0.7"/><rect x="0.5" y="11.3" width="6" height="5.4" fill="#ffffff" stroke="#b8c4d6" stroke-width="0.7"/><rect x="6.5" y="11.3" width="6" height="5.4" fill="#ee3b2e" stroke="#b8c4d6" stroke-width="0.7"/><rect x="12.5" y="11.3" width="6" height="5.4" fill="#ffffff" stroke="#b8c4d6" stroke-width="0.7"/><rect x="18.5" y="11.3" width="6" height="5.4" fill="#ffffff" stroke="#b8c4d6" stroke-width="0.7"/><rect x="0.5" y="16.700000000000003" width="6" height="5.4" fill="#ffffff" stroke="#b8c4d6" stroke-width="0.7"/><rect x="6.5" y="16.700000000000003" width="6" height="5.4" fill="#3f74d6" stroke="#b8c4d6" stroke-width="0.7"/><rect x="12.5" y="16.700000000000003" width="6" height="5.4" fill="#ffffff" stroke="#b8c4d6" stroke-width="0.7"/><rect x="18.5" y="16.700000000000003" width="6" height="5.4" fill="#ffffff" stroke="#b8c4d6" stroke-width="0.7"/><rect x="12.5" y="13" width="12" height="10" fill="#f7f8fb" stroke="#6f7a8c" stroke-width="0.8"/><path d="M18 15.5 L14.5 17 L18 18.5 M14.5 20 H18 M20 15.5 L23 17 L20 18.5 M20 20 H23" stroke="#222" stroke-width="1" fill="none"/></svg>
<div style="position:absolute;top:81.96px;font-size:9.5px;line-height:9.5px;color:#233f72;font-weight:normal;white-space:nowrap;letter-spacing:0.25px;-webkit-text-stroke:0.25px #233f72;left:740.8px;width:400px;text-align:center;">Formato</div>
<div style="position:absolute;top:93.56px;font-size:9.5px;line-height:9.5px;color:#233f72;font-weight:normal;white-space:nowrap;letter-spacing:0.25px;-webkit-text-stroke:0.25px #233f72;left:737.7px;width:400px;text-align:center;">condicional</div>
<svg style="position:absolute;left:966px;top:97px;" width="5" height="3" viewBox="0 0 5 3"><path d="M0 0 L5 0 L2.5 3 Z" fill="#4d5f7c"/></svg>
<svg style="position:absolute;left:990px;top:52px;" width="27" height="23" viewBox="0 0 27 23"><rect x="0.5" y="0.5" width="5" height="5.3" fill="#ffffff" stroke="#b6c3d6" stroke-width="0.7"/><rect x="5.5" y="0.5" width="5" height="5.3" fill="#ffffff" stroke="#b6c3d6" stroke-width="0.7"/><rect x="10.5" y="0.5" width="5" height="5.3" fill="#ffffff" stroke="#b6c3d6" stroke-width="0.7"/><rect x="15.5" y="0.5" width="5" height="5.3" fill="#ffffff" stroke="#b6c3d6" stroke-width="0.7"/><rect x="20.5" y="0.5" width="5" height="5.3" fill="#ffffff" stroke="#b6c3d6" stroke-width="0.7"/><rect x="0.5" y="5.8" width="5" height="5.3" fill="#ffffff" stroke="#b6c3d6" stroke-width="0.7"/><rect x="5.5" y="5.8" width="5" height="5.3" fill="#8fb2ea" stroke="#b6c3d6" stroke-width="0.7"/><rect x="10.5" y="5.8" width="5" height="5.3" fill="#8fb2ea" stroke="#b6c3d6" stroke-width="0.7"/><rect x="15.5" y="5.8" width="5" height="5.3" fill="#8fb2ea" stroke="#b6c3d6" stroke-width="0.7"/><rect x="20.5" y="5.8" width="5" height="5.3" fill="#8fb2ea" stroke="#b6c3d6" stroke-width="0.7"/><rect x="0.5" y="11.1" width="5" height="5.3" fill="#ffffff" stroke="#b6c3d6" stroke-width="0.7"/><rect x="5.5" y="11.1" width="5" height="5.3" fill="#8fb2ea" stroke="#b6c3d6" stroke-width="0.7"/><rect x="10.5" y="11.1" width="5" height="5.3" fill="#8fb2ea" stroke="#b6c3d6" stroke-width="0.7"/><rect x="15.5" y="11.1" width="5" height="5.3" fill="#8fb2ea" stroke="#b6c3d6" stroke-width="0.7"/><rect x="20.5" y="11.1" width="5" height="5.3" fill="#8fb2ea" stroke="#b6c3d6" stroke-width="0.7"/><rect x="0.5" y="16.4" width="5" height="5.3" fill="#ffffff" stroke="#b6c3d6" stroke-width="0.7"/><rect x="5.5" y="16.4" width="5" height="5.3" fill="#8fb2ea" stroke="#b6c3d6" stroke-width="0.7"/><rect x="10.5" y="16.4" width="5" height="5.3" fill="#8fb2ea" stroke="#b6c3d6" stroke-width="0.7"/><rect x="15.5" y="16.4" width="5" height="5.3" fill="#8fb2ea" stroke="#b6c3d6" stroke-width="0.7"/><rect x="20.5" y="16.4" width="5" height="5.3" fill="#8fb2ea" stroke="#b6c3d6" stroke-width="0.7"/><path d="M25 7 L16.5 16.5" stroke="#f2f2f2" stroke-width="2.6"/><path d="M25 7 L16.5 16.5" stroke="#9a9a9a" stroke-width="0.6" fill="none"/><path d="M13 16 L17.5 17 L16 20.5 C13 23, 10 23, 8.5 23 C10 20.5, 11.5 17.5, 13 16 Z" fill="#3d6cc0"/><path d="M14 15.5 L17.5 17 L16.5 19 L13 18 Z" fill="#b08840"/></svg>
<div style="position:absolute;top:81.96px;font-size:9.5px;line-height:9.5px;color:#233f72;font-weight:normal;white-space:nowrap;letter-spacing:0.25px;-webkit-text-stroke:0.25px #233f72;left:802.4px;width:400px;text-align:center;">Dar formato</div>
<div style="position:absolute;top:93.56px;font-size:9.5px;line-height:9.5px;color:#233f72;font-weight:normal;white-space:nowrap;letter-spacing:0.25px;-webkit-text-stroke:0.25px #233f72;left:799.8px;width:400px;text-align:center;">como tabla</div>
<svg style="position:absolute;left:1028px;top:97px;" width="5" height="3" viewBox="0 0 5 3"><path d="M0 0 L5 0 L2.5 3 Z" fill="#4d5f7c"/></svg>
<div style="position:absolute;left:1035px;top:50.9px;width:198px;height:51.4px;border:1px solid #c5d5ea;box-sizing:border-box;background:linear-gradient(#e4ecf7,#d9e4f3)"></div>
<div style="position:absolute;left:1036.3px;top:52.1px;width:91.4px;height:23.6px;background:#fff;border:2px solid #e3b862;box-shadow:inset 0 0 0 1px #fbe7b4;box-sizing:border-box"></div>
<div style="position:absolute;top:58.69px;font-size:11px;line-height:11px;color:#000;font-weight:normal;white-space:nowrap;left:1042.4px;">Normal</div>
<div style="position:absolute;left:1130px;top:54.5px;width:88px;height:18.8px;background:#c6efce"></div>
<div style="position:absolute;top:58.69px;font-size:11px;line-height:11px;color:#006100;font-weight:normal;white-space:nowrap;left:1134px;">Buena</div>
<div style="position:absolute;left:1038.8px;top:78.7px;width:86.5px;height:18.8px;background:#ffc7ce"></div>
<div style="position:absolute;top:83.09px;font-size:11px;line-height:11px;color:#9c0006;font-weight:normal;white-space:nowrap;left:1042.4px;">Incorrecto</div>
<div style="position:absolute;left:1130px;top:78.7px;width:88px;height:18.8px;background:#ffeb9c"></div>
<div style="position:absolute;top:83.09px;font-size:11px;line-height:11px;color:#9c6500;font-weight:normal;white-space:nowrap;left:1134px;">Neutral</div>
<div style="position:absolute;left:1221.5px;top:52px;width:11px;height:16.5px;background:linear-gradient(#f1f5fb,#dfe8f4);border:1px solid #c6d4e6;box-sizing:border-box"></div>
<div style="position:absolute;left:1221.5px;top:69.5px;width:11px;height:15px;background:linear-gradient(#f1f5fb,#dfe8f4);border:1px solid #c6d4e6;box-sizing:border-box"></div>
<div style="position:absolute;left:1221.5px;top:85.5px;width:11px;height:16px;background:linear-gradient(#f1f5fb,#dfe8f4);border:1px solid #c6d4e6;box-sizing:border-box"></div>
<svg style="position:absolute;left:1225px;top:58.5px;" width="5" height="3" viewBox="0 0 5 3"><path d="M0 3 L5 3 L2.5 0 Z" fill="#a8b3c2"/></svg>
<svg style="position:absolute;left:1224.5px;top:75px;" width="5" height="3" viewBox="0 0 5 3"><path d="M0 0 L5 0 L2.5 3 Z" fill="#4f6182"/></svg>
<div style="position:absolute;left:1224.5px;top:90.5px;width:5px;height:1px;background:#4f6182"></div>
<svg style="position:absolute;left:1224.5px;top:92.5px;" width="5" height="3" viewBox="0 0 5 3"><path d="M0 0 L5 0 L2.5 3 Z" fill="#4f6182"/></svg>
<div style="position:absolute;left:1243px;top:45px;width:125.7px;height:74.5px;border-radius:3px;border:1px solid #c2d4ea;box-sizing:border-box;background:linear-gradient(#eaf1fa 0%,#e0e9f5 20%,#d3e0f1 75%,#d9e5f4 100%);box-shadow:inset 0 0 0 1px rgba(255,255,255,0.45)"></div>
<div style="position:absolute;left:1244px;top:106.5px;width:123.7px;height:12px;background:linear-gradient(#c6d8ef,#c0d4ee);border-radius:0 0 2px 2px"></div>
<div style="position:absolute;top:109.02px;font-size:9.31px;line-height:9.31px;color:#4571ad;font-weight:normal;white-space:nowrap;letter-spacing:0.25px;-webkit-text-stroke:0.1px #4571ad;left:1105.8px;width:400px;text-align:center;">Celdas</div>
<svg style="position:absolute;left:1250.5px;top:51px;" width="28" height="24" viewBox="0 0 28 24"><rect x="1" y="0.5" width="12" height="5.5" fill="#fafbfd" stroke="#7d8898" stroke-width="0.8"/><path d="M7 0.5 V6" stroke="#7d8898" stroke-width="0.8"/><rect x="1" y="16.5" width="12" height="7" fill="#fafbfd" stroke="#7d8898" stroke-width="0.8"/><path d="M7 16.5 V23.5 M1 20 H13" stroke="#7d8898" stroke-width="0.8"/><rect x="13" y="8.5" width="14" height="5.5" fill="#6f9ae0" stroke="#4d77c0" stroke-width="0.8"/><path d="M17.5 8.5 V14 M22 8.5 V14" stroke="#a9c4f0" stroke-width="0.8"/><path d="M11 11.2 H5 M7.5 9 L5 11.2 L7.5 13.4" stroke="#2a3e6a" stroke-width="1.1" fill="none"/></svg>
<div style="position:absolute;top:81.86px;font-size:9.5px;line-height:9.5px;color:#233f72;font-weight:normal;white-space:nowrap;letter-spacing:0.25px;-webkit-text-stroke:0.25px #233f72;left:1064.8px;width:400px;text-align:center;">Insertar</div>
<svg style="position:absolute;left:1262px;top:96px;" width="5" height="3" viewBox="0 0 5 3"><path d="M0 0 L5 0 L2.5 3 Z" fill="#4d5f7c"/></svg>
<svg style="position:absolute;left:1292px;top:51px;" width="25" height="24" viewBox="0 0 25 24"><rect x="1" y="0.5" width="12" height="5.5" fill="#fafbfd" stroke="#7d8898" stroke-width="0.8"/><path d="M7 0.5 V6" stroke="#7d8898" stroke-width="0.8"/><rect x="1" y="9" width="12" height="5.5" fill="#fafbfd" stroke="#7d8898" stroke-width="0.8"/><rect x="1" y="16.5" width="12" height="7" fill="#fafbfd" stroke="#7d8898" stroke-width="0.8"/><path d="M7 16.5 V23.5 M1 20 H13" stroke="#7d8898" stroke-width="0.8"/><path d="M12 6 L20 14 M20 6 L12 14" stroke="#e0302a" stroke-width="2"/></svg>
<div style="position:absolute;top:81.86px;font-size:9.5px;line-height:9.5px;color:#233f72;font-weight:normal;white-space:nowrap;letter-spacing:0.25px;-webkit-text-stroke:0.25px #233f72;left:1103.9px;width:400px;text-align:center;">Eliminar</div>
<svg style="position:absolute;left:1301.5px;top:96px;" width="5" height="3" viewBox="0 0 5 3"><path d="M0 0 L5 0 L2.5 3 Z" fill="#4d5f7c"/></svg>
<svg style="position:absolute;left:1330px;top:50.5px;" width="28" height="26" viewBox="0 0 28 26"><path d="M1 1 H27" stroke="#444" stroke-width="0.8" stroke-dasharray="1.5 1"/><rect x="1" y="3.5" width="25.5" height="19" fill="#fafbfd" stroke="#9aa4b4" stroke-width="0.8"/><path d="M9.5 3.5 V22.5 M17.5 3.5 V22.5 M1 9.5 H26.5 M1 16 H26.5" stroke="#c6cdd8" stroke-width="0.8"/><rect x="10" y="7.5" width="7" height="9" fill="#5a8ee0"/><rect x="4" y="22.5" width="8" height="3" fill="#f4f6fa" stroke="#9aa4b4" stroke-width="0.6"/></svg>
<div style="position:absolute;top:81.86px;font-size:9.5px;line-height:9.5px;color:#233f72;font-weight:normal;white-space:nowrap;letter-spacing:0.25px;-webkit-text-stroke:0.25px #233f72;left:1144.6px;width:400px;text-align:center;">Formato</div>
<svg style="position:absolute;left:1342px;top:96px;" width="5" height="3" viewBox="0 0 5 3"><path d="M0 0 L5 0 L2.5 3 Z" fill="#4d5f7c"/></svg>
<div style="position:absolute;left:1372.1px;top:45px;width:186.1px;height:74.5px;border-radius:3px;border:1px solid #c2d4ea;box-sizing:border-box;background:linear-gradient(#eaf1fa 0%,#e0e9f5 20%,#d3e0f1 75%,#d9e5f4 100%);box-shadow:inset 0 0 0 1px rgba(255,255,255,0.45)"></div>
<div style="position:absolute;left:1373.1px;top:106.5px;width:184.1px;height:12px;background:linear-gradient(#c6d8ef,#c0d4ee);border-radius:0 0 2px 2px"></div>
<div style="position:absolute;top:109.02px;font-size:9.31px;line-height:9.31px;color:#4571ad;font-weight:normal;white-space:nowrap;letter-spacing:0.25px;-webkit-text-stroke:0.1px #4571ad;left:1265.3px;width:400px;text-align:center;">Modificar</div>
<div style="position:absolute;top:50.5px;font-size:13px;line-height:13px;color:#111;font-weight:bold;white-space:nowrap;left:1379.5px;">Σ</div>
<div style="position:absolute;top:52.36px;font-size:9.5px;line-height:9.5px;color:#233f72;font-weight:normal;white-space:nowrap;letter-spacing:0.25px;-webkit-text-stroke:0.25px #233f72;left:1394px;">Autosuma</div>
<svg style="position:absolute;left:1444px;top:55.5px;" width="5" height="3" viewBox="0 0 5 3"><path d="M0 0 L5 0 L2.5 3 Z" fill="#4d5f7c"/></svg>
<svg style="position:absolute;left:1378.5px;top:68.5px;" width="12" height="15" viewBox="0 0 12 15"><rect x="0.5" y="0.5" width="10.5" height="13.5" fill="#e6eefa" stroke="#4d6fae"/><rect x="0.5" y="0.5" width="10.5" height="2.5" fill="#4d6fae"/><path d="M5.75 4.5 V10 M3 7.5 L5.75 10.5 L8.5 7.5" stroke="#2a62d6" stroke-width="1.8" fill="none"/></svg>
<div style="position:absolute;top:70.96px;font-size:9.5px;line-height:9.5px;color:#233f72;font-weight:normal;white-space:nowrap;letter-spacing:0.25px;-webkit-text-stroke:0.25px #233f72;left:1394px;">Rellenar</div>
<svg style="position:absolute;left:1434px;top:74px;" width="5" height="3" viewBox="0 0 5 3"><path d="M0 0 L5 0 L2.5 3 Z" fill="#4d5f7c"/></svg>
<svg style="position:absolute;left:1377.5px;top:88px;" width="14" height="13" viewBox="0 0 14 13"><path d="M1 9 L7.5 1.5 L12.5 5 L7 11.5 L3 11.5 Z" fill="#f6f6f8" stroke="#555" stroke-width="1"/><path d="M3 11.5 H13" stroke="#333" stroke-width="1.2"/></svg>
<div style="position:absolute;top:90.36px;font-size:9.5px;line-height:9.5px;color:#233f72;font-weight:normal;white-space:nowrap;letter-spacing:0.25px;-webkit-text-stroke:0.25px #233f72;left:1394px;">Borrar</div>
<svg style="position:absolute;left:1426px;top:93.5px;" width="5" height="3" viewBox="0 0 5 3"><path d="M0 0 L5 0 L2.5 3 Z" fill="#4d5f7c"/></svg>
<svg style="position:absolute;left:1458.5px;top:50.5px;" width="28" height="26" viewBox="0 0 28 26"><text x="0" y="11" font-family="Liberation Serif" font-weight="bold" font-size="12" fill="#3258a8">A</text><text x="0.5" y="24.5" font-family="Liberation Serif" font-weight="bold" font-size="13" fill="#b0322a">Z</text><path d="M4 12 L6 13.5 L4 15" stroke="#333" stroke-width="0.6" fill="none"/><path d="M10 5 H27 L20.5 13 V21 L16.5 23 V13 Z" fill="#9aa3b0" stroke="#6a7380" stroke-width="0.8"/><path d="M12 6 H25 L20 12" fill="#c4cad3"/></svg>
<div style="position:absolute;top:81.56px;font-size:9.5px;line-height:9.5px;color:#233f72;font-weight:normal;white-space:nowrap;letter-spacing:0.25px;-webkit-text-stroke:0.25px #233f72;left:1272.3px;width:400px;text-align:center;">Ordenar</div>
<div style="position:absolute;top:93.26px;font-size:9.5px;line-height:9.5px;color:#233f72;font-weight:normal;white-space:nowrap;letter-spacing:0.25px;-webkit-text-stroke:0.25px #233f72;left:1270px;width:400px;text-align:center;">y filtrar</div>
<svg style="position:absolute;left:1486.5px;top:96.5px;" width="5" height="3" viewBox="0 0 5 3"><path d="M0 0 L5 0 L2.5 3 Z" fill="#4d5f7c"/></svg>
<svg style="position:absolute;left:1510.5px;top:51px;" width="26" height="24" viewBox="0 0 26 24"><defs><linearGradient id="bn" x1="0" x2="1"><stop offset="0" stop-color="#8095c0"/><stop offset="0.5" stop-color="#d5deee"/><stop offset="1" stop-color="#5a6f9c"/></linearGradient></defs><rect x="5" y="1" width="5" height="6" rx="1.5" fill="url(#bn)" stroke="#3e5080" stroke-width="0.7"/><rect x="15" y="1" width="5" height="6" rx="1.5" fill="url(#bn)" stroke="#3e5080" stroke-width="0.7"/><rect x="1" y="7" width="10" height="15" rx="2" fill="url(#bn)" stroke="#3e5080" stroke-width="0.8"/><rect x="14" y="7" width="10" height="15" rx="2" fill="url(#bn)" stroke="#3e5080" stroke-width="0.8"/><rect x="10" y="9" width="5" height="5" fill="#5a6f9c"/></svg>
<div style="position:absolute;top:81.56px;font-size:9.5px;line-height:9.5px;color:#233f72;font-weight:normal;white-space:nowrap;letter-spacing:0.25px;-webkit-text-stroke:0.25px #233f72;left:1324.5px;width:400px;text-align:center;">Buscar y</div>
<div style="position:absolute;top:93.26px;font-size:9.5px;line-height:9.5px;color:#233f72;font-weight:normal;white-space:nowrap;letter-spacing:0.25px;-webkit-text-stroke:0.25px #233f72;left:1320.5px;width:400px;text-align:center;">seleccionar</div>
<svg style="position:absolute;left:1547px;top:96.5px;" width="5" height="3" viewBox="0 0 5 3"><path d="M0 0 L5 0 L2.5 3 Z" fill="#4d5f7c"/></svg>
<div style="position:absolute;left:235px;top:124.5px;width:1389px;height:21.9px;background:#dbe5f3"></div>
<div style="position:absolute;left:240.2px;top:124.6px;width:1383.8px;height:17.7px;background:#fff"></div>
<div style="position:absolute;left:235px;top:124.5px;width:5.5px;height:21.9px;background:#e9f0f8"></div>
<svg style="position:absolute;left:236px;top:128px;" width="3" height="12" viewBox="0 0 3 12"><rect x="0.5" y="1" width="1.6" height="1.6" fill="#333"/><rect x="0.5" y="5" width="1.6" height="1.6" fill="#333"/><rect x="0.5" y="9" width="1.6" height="1.6" fill="#333"/></svg>
<div style="position:absolute;top:128.89px;font-size:11px;line-height:11px;color:#222;font-weight:normal;white-space:nowrap;left:295px;">B7</div>
<svg style="position:absolute;left:366px;top:132.5px;" width="7" height="4" viewBox="0 0 7 4"><path d="M0 0 L7 0 L3.5 4 Z" fill="#111"/></svg>
<div style="position:absolute;left:377.8px;top:124.6px;width:72.7px;height:18.4px;background:linear-gradient(#fbfcfe 0%,#dfe8f6 50%,#c3d5ee 100%);border-radius:9px 0 0 9px;border:1px solid #9fb6d8;border-right:1px solid #6d86ad;box-sizing:border-box"></div>
<div style="position:absolute;left:382px;top:129px;width:9px;height:9px;border-radius:5px;background:radial-gradient(circle at 40% 40%,#ffffff,#9aa6b6 60%,#c8d0dc)"></div>
<div style="position:absolute;top:128.42px;font-size:12.5px;line-height:12.5px;color:#4a5670;font-weight:normal;white-space:nowrap;font-family:'Liberation Serif',serif;left:434.5px;"><i>f</i><span style='font-size:8px'>x</span></div>
<div style="position:absolute;top:128.3px;font-size:11.7px;line-height:11.7px;color:#111;font-weight:normal;white-space:nowrap;left:457.8px;">Cuenta de Id_Contacto</div>
<div style="position:absolute;left:1617px;top:125.5px;width:7px;height:18px;background:linear-gradient(#f8fafd,#dfe7f2);border:1px solid #9fb1c8;border-right:none;box-sizing:border-box"></div>
<svg style="position:absolute;left:1618.5px;top:131px;" width="5" height="6" viewBox="0 0 5 6"><path d="M0 0 L4 2 L0 4 M0 2.5 L4 4.5 L0 6.5" stroke="#333" stroke-width="1" fill="none"/></svg>
<div style="position:absolute;left:235px;top:142.2px;width:1389px;height:1.3px;background:#9fb0c6"></div>
<div style="position:absolute;left:235px;top:143.5px;width:1389px;height:1.5px;background:#e6eef8"></div>
<div style="position:absolute;left:235px;top:145px;width:1389px;height:1.6px;background:#8ea3bf"></div>
<div style="position:absolute;left:240px;top:146.4px;width:1164.5px;height:584.4px;background:#fff"></div>
<div style="position:absolute;left:262.4px;top:176.08px;width:1142.1px;height:1px;background:#d9dbe2"></div>
<div style="position:absolute;left:262.4px;top:190.96px;width:1142.1px;height:1px;background:#d9dbe2"></div>
<div style="position:absolute;left:262.4px;top:205.84px;width:1142.1px;height:1px;background:#d9dbe2"></div>
<div style="position:absolute;left:262.4px;top:220.72px;width:1142.1px;height:1px;background:#d9dbe2"></div>
<div style="position:absolute;left:262.4px;top:235.6px;width:1142.1px;height:1px;background:#d9dbe2"></div>
<div style="position:absolute;left:262.4px;top:250.48px;width:1142.1px;height:1px;background:#d9dbe2"></div>
<div style="position:absolute;left:262.4px;top:265.36px;width:1142.1px;height:1px;background:#d9dbe2"></div>
<div style="position:absolute;left:262.4px;top:280.24px;width:1142.1px;height:1px;background:#d9dbe2"></div>
<div style="position:absolute;left:262.4px;top:295.12px;width:1142.1px;height:1px;background:#d9dbe2"></div>
<div style="position:absolute;left:262.4px;top:310px;width:1142.1px;height:1px;background:#d9dbe2"></div>
<div style="position:absolute;left:262.4px;top:324.88px;width:1142.1px;height:1px;background:#d9dbe2"></div>
<div style="position:absolute;left:262.4px;top:339.76px;width:1142.1px;height:1px;background:#d9dbe2"></div>
<div style="position:absolute;left:262.4px;top:354.64px;width:1142.1px;height:1px;background:#d9dbe2"></div>
<div style="position:absolute;left:262.4px;top:369.52px;width:1142.1px;height:1px;background:#d9dbe2"></div>
<div style="position:absolute;left:262.4px;top:384.4px;width:1142.1px;height:1px;background:#d9dbe2"></div>
<div style="position:absolute;left:262.4px;top:399.28px;width:1142.1px;height:1px;background:#d9dbe2"></div>
<div style="position:absolute;left:262.4px;top:414.16px;width:1142.1px;height:1px;background:#d9dbe2"></div>
<div style="position:absolute;left:262.4px;top:429.04px;width:1142.1px;height:1px;background:#d9dbe2"></div>
<div style="position:absolute;left:262.4px;top:443.92px;width:1142.1px;height:1px;background:#d9dbe2"></div>
<div style="position:absolute;left:262.4px;top:458.8px;width:1142.1px;height:1px;background:#d9dbe2"></div>
<div style="position:absolute;left:262.4px;top:473.68px;width:1142.1px;height:1px;background:#d9dbe2"></div>
<div style="position:absolute;left:262.4px;top:488.56px;width:1142.1px;height:1px;background:#d9dbe2"></div>
<div style="position:absolute;left:262.4px;top:503.44px;width:1142.1px;height:1px;background:#d9dbe2"></div>
<div style="position:absolute;left:262.4px;top:518.32px;width:1142.1px;height:1px;background:#d9dbe2"></div>
<div style="position:absolute;left:262.4px;top:533.2px;width:1142.1px;height:1px;background:#d9dbe2"></div>
<div style="position:absolute;left:262.4px;top:548.08px;width:1142.1px;height:1px;background:#d9dbe2"></div>
<div style="position:absolute;left:262.4px;top:562.96px;width:1142.1px;height:1px;background:#d9dbe2"></div>
<div style="position:absolute;left:262.4px;top:577.84px;width:1142.1px;height:1px;background:#d9dbe2"></div>
<div style="position:absolute;left:262.4px;top:592.72px;width:1142.1px;height:1px;background:#d9dbe2"></div>
<div style="position:absolute;left:262.4px;top:607.6px;width:1142.1px;height:1px;background:#d9dbe2"></div>
<div style="position:absolute;left:262.4px;top:622.48px;width:1142.1px;height:1px;background:#d9dbe2"></div>
<div style="position:absolute;left:262.4px;top:637.36px;width:1142.1px;height:1px;background:#d9dbe2"></div>
<div style="position:absolute;left:262.4px;top:652.24px;width:1142.1px;height:1px;background:#d9dbe2"></div>
<div style="position:absolute;left:262.4px;top:667.12px;width:1142.1px;height:1px;background:#d9dbe2"></div>
<div style="position:absolute;left:262.4px;top:682px;width:1142.1px;height:1px;background:#d9dbe2"></div>
<div style="position:absolute;left:262.4px;top:696.88px;width:1142.1px;height:1px;background:#d9dbe2"></div>
<div style="position:absolute;left:262.4px;top:711.76px;width:1142.1px;height:1px;background:#d9dbe2"></div>
<div style="position:absolute;left:262.4px;top:726.64px;width:1142.1px;height:1px;background:#d9dbe2"></div>
<div style="position:absolute;left:330.9px;top:161.7px;width:1px;height:569.1px;background:#d9dbe2"></div>
<div style="position:absolute;left:463.8px;top:161.7px;width:1px;height:569.1px;background:#d9dbe2"></div>
<div style="position:absolute;left:611.2px;top:161.7px;width:1px;height:569.1px;background:#d9dbe2"></div>
<div style="position:absolute;left:745.9px;top:161.7px;width:1px;height:569.1px;background:#d9dbe2"></div>
<div style="position:absolute;left:847.9px;top:161.7px;width:1px;height:569.1px;background:#d9dbe2"></div>
<div style="position:absolute;left:1007.3px;top:161.7px;width:1px;height:569.1px;background:#d9dbe2"></div>
<div style="position:absolute;left:1103.1px;top:161.7px;width:1px;height:569.1px;background:#d9dbe2"></div>
<div style="position:absolute;left:1208.3px;top:161.7px;width:1px;height:569.1px;background:#d9dbe2"></div>
<div style="position:absolute;left:1305.3px;top:161.7px;width:1px;height:569.1px;background:#d9dbe2"></div>
<div style="position:absolute;left:1385.1px;top:161.7px;width:1px;height:569.1px;background:#d9dbe2"></div>
<div style="position:absolute;left:235px;top:124.5px;width:4px;height:619.5px;background:linear-gradient(90deg,#e3ecf8,#c6d9f1)"></div>
<div style="position:absolute;left:239px;top:124.5px;width:1.6px;height:619.5px;background:#94a9c6"></div>
<svg style="position:absolute;left:235.5px;top:127px;" width="3" height="10" viewBox="0 0 3 10"><rect x="0.3" y="1.5" width="1.8" height="2" fill="#222"/><rect x="0.3" y="6" width="1.8" height="2" fill="#222"/></svg>
<div style="position:absolute;left:240.8px;top:146.6px;width:1163.7px;height:15.1px;background:linear-gradient(#f9fbfd,#e4ebf5)"></div>
<div style="position:absolute;left:240px;top:160.9px;width:1164.5px;height:1px;background:#9eb6ce"></div>
<div style="position:absolute;left:240.8px;top:146.6px;width:21.6px;height:15.1px;background:linear-gradient(#bfd2ee,#aec5e6)"></div>
<svg style="position:absolute;left:252px;top:150px;" width="9" height="9" viewBox="0 0 9 9"><path d="M8 0.5 L8 8 L0.5 8 Z" fill="#e8eef7"/></svg>
<div style="position:absolute;left:331.4px;top:146.4px;width:1054.2px;height:15.3px;background:linear-gradient(#fbe3ad 0%,#f9d48f 40%,#f6c36a 80%,#f2b24a 100%)"></div>
<div style="position:absolute;left:331.4px;top:160.7px;width:1054.2px;height:1.2px;background:#f29b3a"></div>
<div style="position:absolute;left:330.9px;top:146.4px;width:1px;height:15.3px;background:#b8c8dc"></div>
<div style="position:absolute;top:148.39px;font-size:11px;line-height:11px;color:#4f4f4f;font-weight:normal;white-space:nowrap;left:96.9px;width:400px;text-align:center;">A</div>
<div style="position:absolute;left:463.8px;top:146.4px;width:1px;height:15.3px;background:#f0b35c"></div>
<div style="position:absolute;top:148.39px;font-size:11px;line-height:11px;color:#5a4b22;font-weight:normal;white-space:nowrap;left:197.85px;width:400px;text-align:center;">B</div>
<div style="position:absolute;left:611.2px;top:146.4px;width:1px;height:15.3px;background:#f0b35c"></div>
<div style="position:absolute;top:148.39px;font-size:11px;line-height:11px;color:#5a4b22;font-weight:normal;white-space:nowrap;left:338px;width:400px;text-align:center;">C</div>
<div style="position:absolute;left:745.9px;top:146.4px;width:1px;height:15.3px;background:#f0b35c"></div>
<div style="position:absolute;top:148.39px;font-size:11px;line-height:11px;color:#5a4b22;font-weight:normal;white-space:nowrap;left:479.05px;width:400px;text-align:center;">D</div>
<div style="position:absolute;left:847.9px;top:146.4px;width:1px;height:15.3px;background:#f0b35c"></div>
<div style="position:absolute;top:148.39px;font-size:11px;line-height:11px;color:#5a4b22;font-weight:normal;white-space:nowrap;left:597.4px;width:400px;text-align:center;">E</div>
<div style="position:absolute;left:1007.3px;top:146.4px;width:1px;height:15.3px;background:#f0b35c"></div>
<div style="position:absolute;top:148.39px;font-size:11px;line-height:11px;color:#5a4b22;font-weight:normal;white-space:nowrap;left:728.1px;width:400px;text-align:center;">F</div>
<div style="position:absolute;left:1103.1px;top:146.4px;width:1px;height:15.3px;background:#f0b35c"></div>
<div style="position:absolute;top:148.39px;font-size:11px;line-height:11px;color:#5a4b22;font-weight:normal;white-space:nowrap;left:855.7px;width:400px;text-align:center;">G</div>
<div style="position:absolute;left:1208.3px;top:146.4px;width:1px;height:15.3px;background:#f0b35c"></div>
<div style="position:absolute;top:148.39px;font-size:11px;line-height:11px;color:#5a4b22;font-weight:normal;white-space:nowrap;left:956.2px;width:400px;text-align:center;">H</div>
<div style="position:absolute;left:1305.3px;top:146.4px;width:1px;height:15.3px;background:#f0b35c"></div>
<div style="position:absolute;top:148.39px;font-size:11px;line-height:11px;color:#5a4b22;font-weight:normal;white-space:nowrap;left:1057.3px;width:400px;text-align:center;">I</div>
<div style="position:absolute;left:1385.1px;top:146.4px;width:1px;height:15.3px;background:#f0b35c"></div>
<div style="position:absolute;top:148.39px;font-size:11px;line-height:11px;color:#5a4b22;font-weight:normal;white-space:nowrap;left:1145.7px;width:400px;text-align:center;">J</div>
<div style="position:absolute;left:262px;top:146.4px;width:1px;height:15.3px;background:#9eb6ce"></div>
<div style="position:absolute;left:240.6px;top:161.7px;width:21.8px;height:14.88px;background:linear-gradient(90deg,#eaf1f9,#dde7f3)"></div>
<div style="position:absolute;left:240px;top:175.78px;width:22.4px;height:1px;background:#b6c7dd"></div>
<div style="position:absolute;top:164.15px;font-size:11.4px;line-height:11.4px;color:#444;font-weight:normal;white-space:nowrap;left:51.4px;width:400px;text-align:center;">1</div>
<div style="position:absolute;left:240.6px;top:176.58px;width:21.8px;height:14.88px;background:linear-gradient(90deg,#eaf1f9,#dde7f3)"></div>
<div style="position:absolute;left:240px;top:190.66px;width:22.4px;height:1px;background:#b6c7dd"></div>
<div style="position:absolute;top:179.03px;font-size:11.4px;line-height:11.4px;color:#444;font-weight:normal;white-space:nowrap;left:51.4px;width:400px;text-align:center;">2</div>
<div style="position:absolute;left:240.6px;top:191.46px;width:21.8px;height:14.88px;background:linear-gradient(90deg,#eaf1f9,#dde7f3)"></div>
<div style="position:absolute;left:240px;top:205.54px;width:22.4px;height:1px;background:#b6c7dd"></div>
<div style="position:absolute;top:193.91px;font-size:11.4px;line-height:11.4px;color:#444;font-weight:normal;white-space:nowrap;left:51.4px;width:400px;text-align:center;">3</div>
<div style="position:absolute;left:240.6px;top:206.34px;width:21.8px;height:14.88px;background:linear-gradient(90deg,#fad9a0,#f7c577)"></div>
<div style="position:absolute;left:240px;top:220.42px;width:22.4px;height:1px;background:#f0b058"></div>
<div style="position:absolute;top:208.79px;font-size:11.4px;line-height:11.4px;color:#4e4026;font-weight:normal;white-space:nowrap;left:51.4px;width:400px;text-align:center;">4</div>
<div style="position:absolute;left:240.6px;top:221.22px;width:21.8px;height:14.88px;background:linear-gradient(90deg,#fad9a0,#f7c577)"></div>
<div style="position:absolute;left:240px;top:235.3px;width:22.4px;height:1px;background:#f0b058"></div>
<div style="position:absolute;top:223.67px;font-size:11.4px;line-height:11.4px;color:#4e4026;font-weight:normal;white-space:nowrap;left:51.4px;width:400px;text-align:center;">5</div>
<div style="position:absolute;left:240.6px;top:236.1px;width:21.8px;height:14.88px;background:linear-gradient(90deg,#eaf1f9,#dde7f3)"></div>
<div style="position:absolute;left:240px;top:250.18px;width:22.4px;height:1px;background:#b6c7dd"></div>
<div style="position:absolute;top:238.55px;font-size:11.4px;line-height:11.4px;color:#444;font-weight:normal;white-space:nowrap;left:51.4px;width:400px;text-align:center;">6</div>
<div style="position:absolute;left:240.6px;top:250.98px;width:21.8px;height:14.88px;background:linear-gradient(90deg,#fad9a0,#f7c577)"></div>
<div style="position:absolute;left:240px;top:265.06px;width:22.4px;height:1px;background:#f0b058"></div>
<div style="position:absolute;top:253.43px;font-size:11.4px;line-height:11.4px;color:#4e4026;font-weight:normal;white-space:nowrap;left:51.4px;width:400px;text-align:center;">7</div>
<div style="position:absolute;left:240.6px;top:265.86px;width:21.8px;height:14.88px;background:linear-gradient(90deg,#fad9a0,#f7c577)"></div>
<div style="position:absolute;left:240px;top:279.94px;width:22.4px;height:1px;background:#f0b058"></div>
<div style="position:absolute;top:268.31px;font-size:11.4px;line-height:11.4px;color:#4e4026;font-weight:normal;white-space:nowrap;left:51.4px;width:400px;text-align:center;">8</div>
<div style="position:absolute;left:240.6px;top:280.74px;width:21.8px;height:14.88px;background:linear-gradient(90deg,#fad9a0,#f7c577)"></div>
<div style="position:absolute;left:240px;top:294.82px;width:22.4px;height:1px;background:#f0b058"></div>
<div style="position:absolute;top:283.19px;font-size:11.4px;line-height:11.4px;color:#4e4026;font-weight:normal;white-space:nowrap;left:51.4px;width:400px;text-align:center;">9</div>
<div style="position:absolute;left:240.6px;top:295.62px;width:21.8px;height:14.88px;background:linear-gradient(90deg,#fad9a0,#f7c577)"></div>
<div style="position:absolute;left:240px;top:309.7px;width:22.4px;height:1px;background:#f0b058"></div>
<div style="position:absolute;top:298.07px;font-size:11.4px;line-height:11.4px;color:#4e4026;font-weight:normal;white-space:nowrap;left:51.4px;width:400px;text-align:center;">10</div>
<div style="position:absolute;left:240.6px;top:310.5px;width:21.8px;height:14.88px;background:linear-gradient(90deg,#fad9a0,#f7c577)"></div>
<div style="position:absolute;left:240px;top:324.58px;width:22.4px;height:1px;background:#f0b058"></div>
<div style="position:absolute;top:312.95px;font-size:11.4px;line-height:11.4px;color:#4e4026;font-weight:normal;white-space:nowrap;left:51.4px;width:400px;text-align:center;">11</div>
<div style="position:absolute;left:240.6px;top:325.38px;width:21.8px;height:14.88px;background:linear-gradient(90deg,#fad9a0,#f7c577)"></div>
<div style="position:absolute;left:240px;top:339.46px;width:22.4px;height:1px;background:#f0b058"></div>
<div style="position:absolute;top:327.83px;font-size:11.4px;line-height:11.4px;color:#4e4026;font-weight:normal;white-space:nowrap;left:51.4px;width:400px;text-align:center;">12</div>
<div style="position:absolute;left:240.6px;top:340.26px;width:21.8px;height:14.88px;background:linear-gradient(90deg,#fad9a0,#f7c577)"></div>
<div style="position:absolute;left:240px;top:354.34px;width:22.4px;height:1px;background:#f0b058"></div>
<div style="position:absolute;top:342.71px;font-size:11.4px;line-height:11.4px;color:#4e4026;font-weight:normal;white-space:nowrap;left:51.4px;width:400px;text-align:center;">13</div>
<div style="position:absolute;left:240.6px;top:355.14px;width:21.8px;height:14.88px;background:linear-gradient(90deg,#eaf1f9,#dde7f3)"></div>
<div style="position:absolute;left:240px;top:369.22px;width:22.4px;height:1px;background:#b6c7dd"></div>
<div style="position:absolute;top:357.59px;font-size:11.4px;line-height:11.4px;color:#444;font-weight:normal;white-space:nowrap;left:51.4px;width:400px;text-align:center;">14</div>
<div style="position:absolute;left:240.6px;top:370.02px;width:21.8px;height:14.88px;background:linear-gradient(90deg,#eaf1f9,#dde7f3)"></div>
<div style="position:absolute;left:240px;top:384.1px;width:22.4px;height:1px;background:#b6c7dd"></div>
<div style="position:absolute;top:372.47px;font-size:11.4px;line-height:11.4px;color:#444;font-weight:normal;white-space:nowrap;left:51.4px;width:400px;text-align:center;">15</div>
<div style="position:absolute;left:240.6px;top:384.9px;width:21.8px;height:14.88px;background:linear-gradient(90deg,#eaf1f9,#dde7f3)"></div>
<div style="position:absolute;left:240px;top:398.98px;width:22.4px;height:1px;background:#b6c7dd"></div>
<div style="position:absolute;top:387.35px;font-size:11.4px;line-height:11.4px;color:#444;font-weight:normal;white-space:nowrap;left:51.4px;width:400px;text-align:center;">16</div>
<div style="position:absolute;left:240.6px;top:399.78px;width:21.8px;height:14.88px;background:linear-gradient(90deg,#eaf1f9,#dde7f3)"></div>
<div style="position:absolute;left:240px;top:413.86px;width:22.4px;height:1px;background:#b6c7dd"></div>
<div style="position:absolute;top:402.23px;font-size:11.4px;line-height:11.4px;color:#444;font-weight:normal;white-space:nowrap;left:51.4px;width:400px;text-align:center;">17</div>
<div style="position:absolute;left:240.6px;top:414.66px;width:21.8px;height:14.88px;background:linear-gradient(90deg,#eaf1f9,#dde7f3)"></div>
<div style="position:absolute;left:240px;top:428.74px;width:22.4px;height:1px;background:#b6c7dd"></div>
<div style="position:absolute;top:417.11px;font-size:11.4px;line-height:11.4px;color:#444;font-weight:normal;white-space:nowrap;left:51.4px;width:400px;text-align:center;">18</div>
<div style="position:absolute;left:240.6px;top:429.54px;width:21.8px;height:14.88px;background:linear-gradient(90deg,#eaf1f9,#dde7f3)"></div>
<div style="position:absolute;left:240px;top:443.62px;width:22.4px;height:1px;background:#b6c7dd"></div>
<div style="position:absolute;top:431.99px;font-size:11.4px;line-height:11.4px;color:#444;font-weight:normal;white-space:nowrap;left:51.4px;width:400px;text-align:center;">19</div>
<div style="position:absolute;left:240.6px;top:444.42px;width:21.8px;height:14.88px;background:linear-gradient(90deg,#eaf1f9,#dde7f3)"></div>
<div style="position:absolute;left:240px;top:458.5px;width:22.4px;height:1px;background:#b6c7dd"></div>
<div style="position:absolute;top:446.87px;font-size:11.4px;line-height:11.4px;color:#444;font-weight:normal;white-space:nowrap;left:51.4px;width:400px;text-align:center;">20</div>
<div style="position:absolute;left:240.6px;top:459.3px;width:21.8px;height:14.88px;background:linear-gradient(90deg,#eaf1f9,#dde7f3)"></div>
<div style="position:absolute;left:240px;top:473.38px;width:22.4px;height:1px;background:#b6c7dd"></div>
<div style="position:absolute;top:461.75px;font-size:11.4px;line-height:11.4px;color:#444;font-weight:normal;white-space:nowrap;left:51.4px;width:400px;text-align:center;">21</div>
<div style="position:absolute;left:240.6px;top:474.18px;width:21.8px;height:14.88px;background:linear-gradient(90deg,#eaf1f9,#dde7f3)"></div>
<div style="position:absolute;left:240px;top:488.26px;width:22.4px;height:1px;background:#b6c7dd"></div>
<div style="position:absolute;top:476.63px;font-size:11.4px;line-height:11.4px;color:#444;font-weight:normal;white-space:nowrap;left:51.4px;width:400px;text-align:center;">22</div>
<div style="position:absolute;left:240.6px;top:489.06px;width:21.8px;height:14.88px;background:linear-gradient(90deg,#eaf1f9,#dde7f3)"></div>
<div style="position:absolute;left:240px;top:503.14px;width:22.4px;height:1px;background:#b6c7dd"></div>
<div style="position:absolute;top:491.51px;font-size:11.4px;line-height:11.4px;color:#444;font-weight:normal;white-space:nowrap;left:51.4px;width:400px;text-align:center;">23</div>
<div style="position:absolute;left:240.6px;top:503.94px;width:21.8px;height:14.88px;background:linear-gradient(90deg,#eaf1f9,#dde7f3)"></div>
<div style="position:absolute;left:240px;top:518.02px;width:22.4px;height:1px;background:#b6c7dd"></div>
<div style="position:absolute;top:506.39px;font-size:11.4px;line-height:11.4px;color:#444;font-weight:normal;white-space:nowrap;left:51.4px;width:400px;text-align:center;">24</div>
<div style="position:absolute;left:240.6px;top:518.82px;width:21.8px;height:14.88px;background:linear-gradient(90deg,#eaf1f9,#dde7f3)"></div>
<div style="position:absolute;left:240px;top:532.9px;width:22.4px;height:1px;background:#b6c7dd"></div>
<div style="position:absolute;top:521.27px;font-size:11.4px;line-height:11.4px;color:#444;font-weight:normal;white-space:nowrap;left:51.4px;width:400px;text-align:center;">25</div>
<div style="position:absolute;left:240.6px;top:533.7px;width:21.8px;height:14.88px;background:linear-gradient(90deg,#eaf1f9,#dde7f3)"></div>
<div style="position:absolute;left:240px;top:547.78px;width:22.4px;height:1px;background:#b6c7dd"></div>
<div style="position:absolute;top:536.15px;font-size:11.4px;line-height:11.4px;color:#444;font-weight:normal;white-space:nowrap;left:51.4px;width:400px;text-align:center;">26</div>
<div style="position:absolute;left:240.6px;top:548.58px;width:21.8px;height:14.88px;background:linear-gradient(90deg,#eaf1f9,#dde7f3)"></div>
<div style="position:absolute;left:240px;top:562.66px;width:22.4px;height:1px;background:#b6c7dd"></div>
<div style="position:absolute;top:551.03px;font-size:11.4px;line-height:11.4px;color:#444;font-weight:normal;white-space:nowrap;left:51.4px;width:400px;text-align:center;">27</div>
<div style="position:absolute;left:240.6px;top:563.46px;width:21.8px;height:14.88px;background:linear-gradient(90deg,#eaf1f9,#dde7f3)"></div>
<div style="position:absolute;left:240px;top:577.54px;width:22.4px;height:1px;background:#b6c7dd"></div>
<div style="position:absolute;top:565.91px;font-size:11.4px;line-height:11.4px;color:#444;font-weight:normal;white-space:nowrap;left:51.4px;width:400px;text-align:center;">28</div>
<div style="position:absolute;left:240.6px;top:578.34px;width:21.8px;height:14.88px;background:linear-gradient(90deg,#eaf1f9,#dde7f3)"></div>
<div style="position:absolute;left:240px;top:592.42px;width:22.4px;height:1px;background:#b6c7dd"></div>
<div style="position:absolute;top:580.79px;font-size:11.4px;line-height:11.4px;color:#444;font-weight:normal;white-space:nowrap;left:51.4px;width:400px;text-align:center;">29</div>
<div style="position:absolute;left:240.6px;top:593.22px;width:21.8px;height:14.88px;background:linear-gradient(90deg,#eaf1f9,#dde7f3)"></div>
<div style="position:absolute;left:240px;top:607.3px;width:22.4px;height:1px;background:#b6c7dd"></div>
<div style="position:absolute;top:595.67px;font-size:11.4px;line-height:11.4px;color:#444;font-weight:normal;white-space:nowrap;left:51.4px;width:400px;text-align:center;">30</div>
<div style="position:absolute;left:240.6px;top:608.1px;width:21.8px;height:14.88px;background:linear-gradient(90deg,#eaf1f9,#dde7f3)"></div>
<div style="position:absolute;left:240px;top:622.18px;width:22.4px;height:1px;background:#b6c7dd"></div>
<div style="position:absolute;top:610.55px;font-size:11.4px;line-height:11.4px;color:#444;font-weight:normal;white-space:nowrap;left:51.4px;width:400px;text-align:center;">31</div>
<div style="position:absolute;left:240.6px;top:622.98px;width:21.8px;height:14.88px;background:linear-gradient(90deg,#eaf1f9,#dde7f3)"></div>
<div style="position:absolute;left:240px;top:637.06px;width:22.4px;height:1px;background:#b6c7dd"></div>
<div style="position:absolute;top:625.43px;font-size:11.4px;line-height:11.4px;color:#444;font-weight:normal;white-space:nowrap;left:51.4px;width:400px;text-align:center;">32</div>
<div style="position:absolute;left:240.6px;top:637.86px;width:21.8px;height:14.88px;background:linear-gradient(90deg,#eaf1f9,#dde7f3)"></div>
<div style="position:absolute;left:240px;top:651.94px;width:22.4px;height:1px;background:#b6c7dd"></div>
<div style="position:absolute;top:640.31px;font-size:11.4px;line-height:11.4px;color:#444;font-weight:normal;white-space:nowrap;left:51.4px;width:400px;text-align:center;">33</div>
<div style="position:absolute;left:240.6px;top:652.74px;width:21.8px;height:14.88px;background:linear-gradient(90deg,#eaf1f9,#dde7f3)"></div>
<div style="position:absolute;left:240px;top:666.82px;width:22.4px;height:1px;background:#b6c7dd"></div>
<div style="position:absolute;top:655.19px;font-size:11.4px;line-height:11.4px;color:#444;font-weight:normal;white-space:nowrap;left:51.4px;width:400px;text-align:center;">34</div>
<div style="position:absolute;left:240.6px;top:667.62px;width:21.8px;height:14.88px;background:linear-gradient(90deg,#eaf1f9,#dde7f3)"></div>
<div style="position:absolute;left:240px;top:681.7px;width:22.4px;height:1px;background:#b6c7dd"></div>
<div style="position:absolute;top:670.07px;font-size:11.4px;line-height:11.4px;color:#444;font-weight:normal;white-space:nowrap;left:51.4px;width:400px;text-align:center;">35</div>
<div style="position:absolute;left:240.6px;top:682.5px;width:21.8px;height:14.88px;background:linear-gradient(90deg,#eaf1f9,#dde7f3)"></div>
<div style="position:absolute;left:240px;top:696.58px;width:22.4px;height:1px;background:#b6c7dd"></div>
<div style="position:absolute;top:684.95px;font-size:11.4px;line-height:11.4px;color:#444;font-weight:normal;white-space:nowrap;left:51.4px;width:400px;text-align:center;">36</div>
<div style="position:absolute;left:240.6px;top:697.38px;width:21.8px;height:14.88px;background:linear-gradient(90deg,#eaf1f9,#dde7f3)"></div>
<div style="position:absolute;left:240px;top:711.46px;width:22.4px;height:1px;background:#b6c7dd"></div>
<div style="position:absolute;top:699.83px;font-size:11.4px;line-height:11.4px;color:#444;font-weight:normal;white-space:nowrap;left:51.4px;width:400px;text-align:center;">37</div>
<div style="position:absolute;left:240.6px;top:712.26px;width:21.8px;height:14.88px;background:linear-gradient(90deg,#eaf1f9,#dde7f3)"></div>
<div style="position:absolute;left:240px;top:726.34px;width:22.4px;height:1px;background:#b6c7dd"></div>
<div style="position:absolute;top:714.71px;font-size:11.4px;line-height:11.4px;color:#444;font-weight:normal;white-space:nowrap;left:51.4px;width:400px;text-align:center;">38</div>
<div style="position:absolute;left:240.6px;top:727.14px;width:21.8px;height:3.66px;background:linear-gradient(90deg,#eaf1f9,#dde7f3)"></div>
<div style="position:absolute;left:240px;top:730px;width:22.4px;height:1px;background:#b6c7dd"></div>
<div style="position:absolute;top:729.59px;font-size:11.4px;line-height:11.4px;color:#444;font-weight:normal;white-space:nowrap;left:51.4px;width:400px;text-align:center;">39</div>
<div style="position:absolute;left:262px;top:161.7px;width:1px;height:569.1px;background:#9eb6ce"></div>
<div style="position:absolute;top:178.8px;font-size:11.2px;line-height:11.2px;color:#000;font-weight:bold;white-space:nowrap;left:334.4px;">CONTACTOS POTENCIALES</div>
<div style="position:absolute;left:331.4px;top:206.34px;width:280.3px;height:29.76px;background:#dadef0"></div>
<div style="position:absolute;left:331.4px;top:206.34px;width:280.3px;height:1px;background:#e3e7f4"></div>
<div style="position:absolute;left:331.4px;top:234.9px;width:280.3px;height:1.2px;background:#a3b0d6"></div>
<div style="position:absolute;top:208.56px;font-size:11.2px;line-height:11.2px;color:#000;font-weight:bold;white-space:nowrap;left:334.4px;">Propietario</div>
<div style="position:absolute;top:223.44px;font-size:11.2px;line-height:11.2px;color:#000;font-weight:bold;white-space:nowrap;left:334.4px;">Estado</div>
<div style="position:absolute;top:208.56px;font-size:11.2px;line-height:11.2px;color:#000;font-weight:normal;white-space:nowrap;left:467.3px;">Administrador de CRM i8</div>
<div style="position:absolute;top:223.44px;font-size:11.2px;line-height:11.2px;color:#000;font-weight:normal;white-space:nowrap;left:467.3px;">Nuevo</div>
<div style="position:absolute;left:596.8px;top:206.5px;width:13.7px;height:13.5px;background:linear-gradient(#fbfcfd,#e6e9ef);border:1px solid #b5bdcc;border-radius:2px;box-sizing:border-box"></div>
<svg style="position:absolute;left:600.65px;top:211.75px;" width="6" height="4" viewBox="0 0 6 4"><path d="M0 0 L6 0 L3 3.5 Z" fill="#2a2f5a"/></svg>
<div style="position:absolute;left:596.8px;top:222px;width:13.7px;height:13.5px;background:linear-gradient(#fbfcfd,#e6e9ef);border:1px solid #b5bdcc;border-radius:2px;box-sizing:border-box"></div>
<svg style="position:absolute;left:598.65px;top:224.25px;" width="10" height="9" viewBox="0 0 10 9"><path d="M3.5 0.5 H9.5 L7.2 3.8 V8 L5.8 7.2 V3.8 Z" fill="#222"/><path d="M0.5 6 H4 L2.25 8 Z" fill="#222"/></svg>
<div style="position:absolute;left:331.4px;top:250.98px;width:1054.2px;height:29.76px;background:#dadef0"></div>
<div style="position:absolute;left:331.4px;top:250.98px;width:1054.2px;height:1px;background:#e7eaf5"></div>
<div style="position:absolute;left:331.4px;top:280.74px;width:1054.2px;height:59.52px;background:#eff1f9"></div>
<div style="position:absolute;left:331.4px;top:295.12px;width:1054.2px;height:1px;background:#cfd5ea"></div>
<div style="position:absolute;left:331.4px;top:310px;width:1054.2px;height:1px;background:#cfd5ea"></div>
<div style="position:absolute;left:331.4px;top:324.88px;width:1054.2px;height:1px;background:#cfd5ea"></div>
<div style="position:absolute;left:463.8px;top:265.86px;width:1px;height:74.4px;background:#dfe3f1"></div>
<div style="position:absolute;left:611.2px;top:265.86px;width:1px;height:74.4px;background:#dfe3f1"></div>
<div style="position:absolute;left:745.9px;top:265.86px;width:1px;height:74.4px;background:#dfe3f1"></div>
<div style="position:absolute;left:847.9px;top:265.86px;width:1px;height:74.4px;background:#dfe3f1"></div>
<div style="position:absolute;left:1007.3px;top:265.86px;width:1px;height:74.4px;background:#dfe3f1"></div>
<div style="position:absolute;left:1103.1px;top:265.86px;width:1px;height:74.4px;background:#dfe3f1"></div>
<div style="position:absolute;left:1208.3px;top:265.86px;width:1px;height:74.4px;background:#dfe3f1"></div>
<div style="position:absolute;left:1305.3px;top:265.86px;width:1px;height:74.4px;background:#dfe3f1"></div>
<div style="position:absolute;left:331.4px;top:279.94px;width:1054.2px;height:1.2px;background:#a3b0d6"></div>
<div style="position:absolute;left:331.4px;top:340.26px;width:1054.2px;height:14.88px;background:#dadef0"></div>
<div style="position:absolute;left:331.4px;top:339.96px;width:1054.2px;height:1.2px;background:#a3b0d6"></div>
<div style="position:absolute;left:332.8px;top:252.2px;width:131.2px;height:13.8px;border:1.6px solid #3a3a3a;box-sizing:border-box;background:#fbfbfe"></div>
<div style="position:absolute;top:253.2px;font-size:11.2px;line-height:11.2px;color:#000;font-weight:bold;white-space:nowrap;letter-spacing:0.14px;left:334px;">Cuenta de Id_Contacto</div>
<div style="position:absolute;top:253.2px;font-size:11.2px;line-height:11.2px;color:#000;font-weight:bold;white-space:nowrap;left:1211.8px;">Mes_Creación</div>
<div style="position:absolute;left:1290.3px;top:251px;width:14.7px;height:14px;background:linear-gradient(#fbfcfd,#e6e9ef);border:1px solid #b5bdcc;border-radius:2px;box-sizing:border-box"></div>
<svg style="position:absolute;left:1294.65px;top:256.5px;" width="6" height="4" viewBox="0 0 6 4"><path d="M0 0 L6 0 L3 3.5 Z" fill="#2a2f5a"/></svg>
<div style="position:absolute;top:268.08px;font-size:11.2px;line-height:11.2px;color:#000;font-weight:bold;white-space:nowrap;left:334.4px;">Nombre_Contacto</div>
<div style="position:absolute;left:450.3px;top:266.46px;width:13.2px;height:13.2px;background:linear-gradient(#fbfcfd,#e6e9ef);border:1px solid #b5bdcc;border-radius:2px;box-sizing:border-box"></div>
<svg style="position:absolute;left:453.9px;top:271.56px;" width="6" height="4" viewBox="0 0 6 4"><path d="M0 0 L6 0 L3 3.5 Z" fill="#2a2f5a"/></svg>
<div style="position:absolute;top:268.08px;font-size:11.2px;line-height:11.2px;color:#000;font-weight:bold;white-space:nowrap;left:467.3px;">Tema</div>
<div style="position:absolute;left:597.7px;top:266.46px;width:13.2px;height:13.2px;background:linear-gradient(#fbfcfd,#e6e9ef);border:1px solid #b5bdcc;border-radius:2px;box-sizing:border-box"></div>
<svg style="position:absolute;left:601.3px;top:271.56px;" width="6" height="4" viewBox="0 0 6 4"><path d="M0 0 L6 0 L3 3.5 Z" fill="#2a2f5a"/></svg>
<div style="position:absolute;top:268.08px;font-size:11.2px;line-height:11.2px;color:#000;font-weight:bold;white-space:nowrap;left:614.7px;">Nombre_Empresa</div>
<div style="position:absolute;left:732.4px;top:266.46px;width:13.2px;height:13.2px;background:linear-gradient(#fbfcfd,#e6e9ef);border:1px solid #b5bdcc;border-radius:2px;box-sizing:border-box"></div>
<svg style="position:absolute;left:736px;top:271.56px;" width="6" height="4" viewBox="0 0 6 4"><path d="M0 0 L6 0 L3 3.5 Z" fill="#2a2f5a"/></svg>
<div style="position:absolute;top:268.08px;font-size:11.2px;line-height:11.2px;color:#000;font-weight:bold;white-space:nowrap;left:749.4px;">Nivel_Interés</div>
<div style="position:absolute;left:834.4px;top:266.46px;width:13.2px;height:13.2px;background:linear-gradient(#fbfcfd,#e6e9ef);border:1px solid #b5bdcc;border-radius:2px;box-sizing:border-box"></div>
<svg style="position:absolute;left:838px;top:271.56px;" width="6" height="4" viewBox="0 0 6 4"><path d="M0 0 L6 0 L3 3.5 Z" fill="#2a2f5a"/></svg>
<div style="position:absolute;top:268.08px;font-size:11.2px;line-height:11.2px;color:#000;font-weight:bold;white-space:nowrap;left:851.4px;">Fase_Cualificación</div>
<div style="position:absolute;left:993.8px;top:266.46px;width:13.2px;height:13.2px;background:linear-gradient(#fbfcfd,#e6e9ef);border:1px solid #b5bdcc;border-radius:2px;box-sizing:border-box"></div>
<svg style="position:absolute;left:997.4px;top:271.56px;" width="6" height="4" viewBox="0 0 6 4"><path d="M0 0 L6 0 L3 3.5 Z" fill="#2a2f5a"/></svg>
<div style="position:absolute;top:268.08px;font-size:11.2px;line-height:11.2px;color:#000;font-weight:bold;white-space:nowrap;left:1010.8px;">Teléfono</div>
<div style="position:absolute;left:1089.6px;top:266.46px;width:13.2px;height:13.2px;background:linear-gradient(#fbfcfd,#e6e9ef);border:1px solid #b5bdcc;border-radius:2px;box-sizing:border-box"></div>
<svg style="position:absolute;left:1093.2px;top:271.56px;" width="6" height="4" viewBox="0 0 6 4"><path d="M0 0 L6 0 L3 3.5 Z" fill="#2a2f5a"/></svg>
<div style="position:absolute;top:268.08px;font-size:11.2px;line-height:11.2px;color:#000;font-weight:bold;white-space:nowrap;left:1106.6px;">Email_Contacto</div>
<div style="position:absolute;left:1194.8px;top:266.46px;width:13.2px;height:13.2px;background:linear-gradient(#fbfcfd,#e6e9ef);border:1px solid #b5bdcc;border-radius:2px;box-sizing:border-box"></div>
<svg style="position:absolute;left:1198.4px;top:271.56px;" width="6" height="4" viewBox="0 0 6 4"><path d="M0 0 L6 0 L3 3.5 Z" fill="#2a2f5a"/></svg>
<div style="position:absolute;top:268.08px;font-size:11.2px;line-height:11.2px;color:#000;font-weight:bold;white-space:nowrap;right:597.2px;">10</div>
<div style="position:absolute;top:268.08px;font-size:11.2px;line-height:11.2px;color:#000;font-weight:bold;white-space:nowrap;left:1309.8px;">Total general</div>
<div style="position:absolute;left:337.4px;top:284.74px;width:8px;height:8px;border:1px solid #a3aab8;box-sizing:border-box;background:#f6f7fa;border-radius:1px"></div>
<div style="position:absolute;left:339.4px;top:288.24px;width:4px;height:1px;background:#555"></div>
<div style="position:absolute;top:282.96px;font-size:11.2px;line-height:11.2px;color:#000;font-weight:bold;white-space:nowrap;letter-spacing:0.12px;left:346.4px;">José Antonio García</div>
<div style="position:absolute;left:470.3px;top:284.74px;width:8px;height:8px;border:1px solid #a3aab8;box-sizing:border-box;background:#f6f7fa;border-radius:1px"></div>
<div style="position:absolute;left:472.3px;top:288.24px;width:4px;height:1px;background:#555"></div>
<div style="position:absolute;top:282.96px;font-size:11.2px;line-height:11.2px;color:#000;font-weight:bold;white-space:nowrap;letter-spacing:0.2px;left:479.3px;">Tarjetas de Adquisición</div>
<div style="position:absolute;left:617.7px;top:284.74px;width:8px;height:8px;border:1px solid #a3aab8;box-sizing:border-box;background:#f6f7fa;border-radius:1px"></div>
<div style="position:absolute;left:619.7px;top:288.24px;width:4px;height:1px;background:#555"></div>
<div style="position:absolute;top:282.96px;font-size:11.2px;line-height:11.2px;color:#000;font-weight:normal;white-space:nowrap;left:626.7px;">RALSER, S.L</div>
<div style="position:absolute;left:752.4px;top:284.74px;width:8px;height:8px;border:1px solid #a3aab8;box-sizing:border-box;background:#f6f7fa;border-radius:1px"></div>
<div style="position:absolute;left:754.4px;top:288.24px;width:4px;height:1px;background:#555"></div>
<div style="position:absolute;top:282.96px;font-size:11.2px;line-height:11.2px;color:#000;font-weight:bold;white-space:nowrap;letter-spacing:0.2px;left:761.4px;">Algo Interesado</div>
<div style="position:absolute;left:854.4px;top:284.74px;width:8px;height:8px;border:1px solid #a3aab8;box-sizing:border-box;background:#f6f7fa;border-radius:1px"></div>
<div style="position:absolute;left:856.4px;top:288.24px;width:4px;height:1px;background:#555"></div>
<div style="position:absolute;top:282.96px;font-size:11.2px;line-height:11.2px;color:#000;font-weight:normal;white-space:nowrap;left:863.4px;">Llamada Contacto Inicial</div>
<div style="position:absolute;left:1013.8px;top:284.74px;width:8px;height:8px;border:1px solid #a3aab8;box-sizing:border-box;background:#f6f7fa;border-radius:1px"></div>
<div style="position:absolute;left:1015.8px;top:288.24px;width:4px;height:1px;background:#555"></div>
<div style="position:absolute;top:282.96px;font-size:11.2px;line-height:11.2px;color:#000;font-weight:bold;white-space:nowrap;left:1022.8px;">93 555 55 55</div>
<div style="position:absolute;top:282.96px;font-size:11.2px;line-height:11.2px;color:#000;font-weight:normal;white-space:nowrap;right:597.2px;">1</div>
<div style="position:absolute;top:282.96px;font-size:11.2px;line-height:11.2px;color:#000;font-weight:normal;white-space:nowrap;right:518.4px;">1</div>
<div style="position:absolute;left:337.4px;top:299.62px;width:8px;height:8px;border:1px solid #a3aab8;box-sizing:border-box;background:#f6f7fa;border-radius:1px"></div>
<div style="position:absolute;left:339.4px;top:303.12px;width:4px;height:1px;background:#555"></div>
<div style="position:absolute;top:297.84px;font-size:11.2px;line-height:11.2px;color:#000;font-weight:bold;white-space:nowrap;letter-spacing:0.2px;left:346.4px;">Victor Valle</div>
<div style="position:absolute;left:470.3px;top:299.62px;width:8px;height:8px;border:1px solid #a3aab8;box-sizing:border-box;background:#f6f7fa;border-radius:1px"></div>
<div style="position:absolute;left:472.3px;top:303.12px;width:4px;height:1px;background:#555"></div>
<div style="position:absolute;top:297.84px;font-size:11.2px;line-height:11.2px;color:#000;font-weight:bold;white-space:nowrap;letter-spacing:0.2px;left:479.3px;">Panel PC</div>
<div style="position:absolute;left:617.7px;top:299.62px;width:8px;height:8px;border:1px solid #a3aab8;box-sizing:border-box;background:#f6f7fa;border-radius:1px"></div>
<div style="position:absolute;left:619.7px;top:303.12px;width:4px;height:1px;background:#555"></div>
<div style="position:absolute;top:297.84px;font-size:11.2px;line-height:11.2px;color:#000;font-weight:normal;white-space:nowrap;left:626.7px;">PPT. CONTROL, S.L.</div>
<div style="position:absolute;left:752.4px;top:299.62px;width:8px;height:8px;border:1px solid #a3aab8;box-sizing:border-box;background:#f6f7fa;border-radius:1px"></div>
<div style="position:absolute;left:754.4px;top:303.12px;width:4px;height:1px;background:#555"></div>
<div style="position:absolute;top:297.84px;font-size:11.2px;line-height:11.2px;color:#000;font-weight:bold;white-space:nowrap;letter-spacing:0.2px;left:761.4px;">Algo Interesado</div>
<div style="position:absolute;left:854.4px;top:299.62px;width:8px;height:8px;border:1px solid #a3aab8;box-sizing:border-box;background:#f6f7fa;border-radius:1px"></div>
<div style="position:absolute;left:856.4px;top:303.12px;width:4px;height:1px;background:#555"></div>
<div style="position:absolute;top:297.84px;font-size:11.2px;line-height:11.2px;color:#000;font-weight:normal;white-space:nowrap;left:863.4px;">Envío de Información</div>
<div style="position:absolute;left:1013.8px;top:299.62px;width:8px;height:8px;border:1px solid #a3aab8;box-sizing:border-box;background:#f6f7fa;border-radius:1px"></div>
<div style="position:absolute;left:1015.8px;top:303.12px;width:4px;height:1px;background:#555"></div>
<div style="position:absolute;top:297.84px;font-size:11.2px;line-height:11.2px;color:#000;font-weight:bold;white-space:nowrap;left:1022.8px;">93 555 55 55</div>
<div style="position:absolute;top:297.84px;font-size:11.2px;line-height:11.2px;color:#000;font-weight:normal;white-space:nowrap;right:597.2px;">1</div>
<div style="position:absolute;top:297.84px;font-size:11.2px;line-height:11.2px;color:#000;font-weight:normal;white-space:nowrap;right:518.4px;">1</div>
<div style="position:absolute;left:337.4px;top:314.5px;width:8px;height:8px;border:1px solid #a3aab8;box-sizing:border-box;background:#f6f7fa;border-radius:1px"></div>
<div style="position:absolute;left:339.4px;top:318px;width:4px;height:1px;background:#555"></div>
<div style="position:absolute;top:312.72px;font-size:11.2px;line-height:11.2px;color:#000;font-weight:bold;white-space:nowrap;letter-spacing:0.2px;left:346.4px;">Raúl Bermejo</div>
<div style="position:absolute;left:470.3px;top:314.5px;width:8px;height:8px;border:1px solid #a3aab8;box-sizing:border-box;background:#f6f7fa;border-radius:1px"></div>
<div style="position:absolute;left:472.3px;top:318px;width:4px;height:1px;background:#555"></div>
<div style="position:absolute;top:312.72px;font-size:11.2px;line-height:11.2px;color:#000;font-weight:bold;white-space:nowrap;letter-spacing:0.2px;left:479.3px;">Pantalla 10.1</div>
<div style="position:absolute;left:617.7px;top:314.5px;width:8px;height:8px;border:1px solid #a3aab8;box-sizing:border-box;background:#f6f7fa;border-radius:1px"></div>
<div style="position:absolute;left:619.7px;top:318px;width:4px;height:1px;background:#555"></div>
<div style="position:absolute;top:312.72px;font-size:11.2px;line-height:11.2px;color:#000;font-weight:normal;white-space:nowrap;left:626.7px;">AVANSYS, S.L.</div>
<div style="position:absolute;left:752.4px;top:314.5px;width:8px;height:8px;border:1px solid #a3aab8;box-sizing:border-box;background:#f6f7fa;border-radius:1px"></div>
<div style="position:absolute;left:754.4px;top:318px;width:4px;height:1px;background:#555"></div>
<div style="position:absolute;top:312.72px;font-size:11.2px;line-height:11.2px;color:#000;font-weight:bold;white-space:nowrap;letter-spacing:0.2px;left:761.4px;">Algo Interesado</div>
<div style="position:absolute;left:854.4px;top:314.5px;width:8px;height:8px;border:1px solid #a3aab8;box-sizing:border-box;background:#f6f7fa;border-radius:1px"></div>
<div style="position:absolute;left:856.4px;top:318px;width:4px;height:1px;background:#555"></div>
<div style="position:absolute;top:312.72px;font-size:11.2px;line-height:11.2px;color:#000;font-weight:normal;white-space:nowrap;left:863.4px;">Llamada Contacto Inicial</div>
<div style="position:absolute;left:1013.8px;top:314.5px;width:8px;height:8px;border:1px solid #a3aab8;box-sizing:border-box;background:#f6f7fa;border-radius:1px"></div>
<div style="position:absolute;left:1015.8px;top:318px;width:4px;height:1px;background:#555"></div>
<div style="position:absolute;top:312.72px;font-size:11.2px;line-height:11.2px;color:#000;font-weight:bold;white-space:nowrap;left:1022.8px;">93 555 55 55</div>
<div style="position:absolute;top:312.72px;font-size:11.2px;line-height:11.2px;color:#000;font-weight:normal;white-space:nowrap;right:597.2px;">1</div>
<div style="position:absolute;top:312.72px;font-size:11.2px;line-height:11.2px;color:#000;font-weight:normal;white-space:nowrap;right:518.4px;">1</div>
<div style="position:absolute;left:337.4px;top:329.38px;width:8px;height:8px;border:1px solid #a3aab8;box-sizing:border-box;background:#f6f7fa;border-radius:1px"></div>
<div style="position:absolute;left:339.4px;top:332.88px;width:4px;height:1px;background:#555"></div>
<div style="position:absolute;top:327.6px;font-size:11.2px;line-height:11.2px;color:#000;font-weight:bold;white-space:nowrap;letter-spacing:0.2px;left:346.4px;">David González</div>
<div style="position:absolute;left:470.3px;top:329.38px;width:8px;height:8px;border:1px solid #a3aab8;box-sizing:border-box;background:#f6f7fa;border-radius:1px"></div>
<div style="position:absolute;left:472.3px;top:332.88px;width:4px;height:1px;background:#555"></div>
<div style="position:absolute;top:327.6px;font-size:11.2px;line-height:11.2px;color:#000;font-weight:bold;white-space:nowrap;letter-spacing:0.2px;left:479.3px;">Caja Industrial</div>
<div style="position:absolute;left:617.7px;top:329.38px;width:8px;height:8px;border:1px solid #a3aab8;box-sizing:border-box;background:#f6f7fa;border-radius:1px"></div>
<div style="position:absolute;left:619.7px;top:332.88px;width:4px;height:1px;background:#555"></div>
<div style="position:absolute;top:327.6px;font-size:11.2px;line-height:11.2px;color:#000;font-weight:normal;white-space:nowrap;left:626.7px;">VIN STD, S.L.</div>
<div style="position:absolute;left:752.4px;top:329.38px;width:8px;height:8px;border:1px solid #a3aab8;box-sizing:border-box;background:#f6f7fa;border-radius:1px"></div>
<div style="position:absolute;left:754.4px;top:332.88px;width:4px;height:1px;background:#555"></div>
<div style="position:absolute;top:327.6px;font-size:11.2px;line-height:11.2px;color:#000;font-weight:bold;white-space:nowrap;letter-spacing:0.2px;left:761.4px;">Algo Interesado</div>
<div style="position:absolute;left:854.4px;top:329.38px;width:8px;height:8px;border:1px solid #a3aab8;box-sizing:border-box;background:#f6f7fa;border-radius:1px"></div>
<div style="position:absolute;left:856.4px;top:332.88px;width:4px;height:1px;background:#555"></div>
<div style="position:absolute;top:327.6px;font-size:11.2px;line-height:11.2px;color:#000;font-weight:normal;white-space:nowrap;left:863.4px;">Llamada Contacto Inicial</div>
<div style="position:absolute;left:1013.8px;top:329.38px;width:8px;height:8px;border:1px solid #a3aab8;box-sizing:border-box;background:#f6f7fa;border-radius:1px"></div>
<div style="position:absolute;left:1015.8px;top:332.88px;width:4px;height:1px;background:#555"></div>
<div style="position:absolute;top:327.6px;font-size:11.2px;line-height:11.2px;color:#000;font-weight:bold;white-space:nowrap;left:1022.8px;">93 555 55 55</div>
<div style="position:absolute;top:327.6px;font-size:11.2px;line-height:11.2px;color:#000;font-weight:normal;white-space:nowrap;right:597.2px;">1</div>
<div style="position:absolute;top:327.6px;font-size:11.2px;line-height:11.2px;color:#000;font-weight:normal;white-space:nowrap;right:518.4px;">1</div>
<div style="position:absolute;top:342.48px;font-size:11.2px;line-height:11.2px;color:#000;font-weight:bold;white-space:nowrap;letter-spacing:0.3px;left:334.4px;">Total general</div>
<div style="position:absolute;top:342.48px;font-size:11.2px;line-height:11.2px;color:#000;font-weight:bold;white-space:nowrap;right:597.2px;">4</div>
<div style="position:absolute;top:342.48px;font-size:11.2px;line-height:11.2px;color:#000;font-weight:bold;white-space:nowrap;right:518.4px;">4</div>
<div style="position:absolute;left:1404.5px;top:146.4px;width:13.5px;height:597.1px;background:#84a3d3;border-left:1px solid #6c8cbf;box-sizing:border-box"></div>
<div style="position:absolute;left:1406px;top:147.8px;width:10.5px;height:4.4px;background:linear-gradient(#fdfdfe,#dce5f2);border:1px solid #95acd0;border-radius:2px;box-sizing:border-box"></div>
<svg style="position:absolute;left:1407px;top:156.5px;" width="10" height="6" viewBox="0 0 10 6"><path d="M0.5 5.5 L9.5 5.5 L5 0.5 Z" fill="#273f74"/></svg>
<div style="position:absolute;left:1405.5px;top:167px;width:11px;height:519.5px;background:linear-gradient(90deg,#f4f6fb,#dde3ee 60%,#cbd3e2);border:1px solid #9aaccb;border-radius:2px;box-sizing:border-box"></div>
<div style="position:absolute;left:1407.5px;top:423px;width:7px;height:6px;background:#aeb6c4"></div>
<svg style="position:absolute;left:1407px;top:721.5px;" width="10" height="6" viewBox="0 0 10 6"><path d="M0.5 0.5 L9.5 0.5 L5 5.5 Z" fill="#273f74"/></svg>
<div style="position:absolute;left:1417.5px;top:146.4px;width:206.5px;height:597px;background:#dae6f5;border-left:2px solid #7a94bf;border-top:1.5px solid #8ea6c8;box-sizing:border-box"></div>
<div style="position:absolute;left:1419.5px;top:148px;width:204.5px;height:15.5px;background:linear-gradient(#e9f1fb,#d9e6f7)"></div>
<div style="position:absolute;top:151.67px;font-size:10.2px;line-height:10.2px;color:#15428b;font-weight:bold;white-space:nowrap;letter-spacing:0.05px;-webkit-text-stroke:0.2px #15428b;left:1421px;">Lista de campos de tabla dinámica</div>
<svg style="position:absolute;left:1603.5px;top:154px;" width="8" height="5" viewBox="0 0 8 5"><path d="M0 0 L8 0 L4 4.5 Z" fill="#15428b"/></svg>
<svg style="position:absolute;left:1617.5px;top:152.5px;" width="7" height="8" viewBox="0 0 7 8"><path d="M1 1 L6.5 7 M6.5 1 L1 7" stroke="#15428b" stroke-width="1.8"/></svg>
<div style="position:absolute;top:171.01px;font-size:9.2px;line-height:9.2px;color:#111;font-weight:normal;white-space:nowrap;left:1425px;">Seleccionar campos para agregar al</div>
<div style="position:absolute;top:182.01px;font-size:9.2px;line-height:9.2px;color:#111;font-weight:normal;white-space:nowrap;left:1425px;">informe:</div>
<div style="position:absolute;left:1586px;top:169.5px;width:36.5px;height:22px;background:#d6d3cc;border-style:solid;border-width:1px;border-color:#f4f3ef #6f6d68 #6f6d68 #f4f3ef;box-sizing:border-box;border-width:1px 2px 2px 1px;"></div>
<svg style="position:absolute;left:1590.5px;top:172.5px;" width="16" height="15" viewBox="0 0 16 15"><rect x="1" y="4" width="6" height="10" fill="#fff" stroke="#3d64b8" stroke-width="1"/><rect x="7" y="1" width="6" height="13" fill="#e6eefc" stroke="#3d64b8" stroke-width="1"/><rect x="2.5" y="8" width="3" height="4" fill="#3d64b8"/><rect x="8.5" y="8" width="3" height="4" fill="#3d64b8"/></svg>
<svg style="position:absolute;left:1608.5px;top:178.5px;" width="8" height="5" viewBox="0 0 8 5"><path d="M0 0 L8 0 L4 4.5 Z" fill="#000"/></svg>
<div style="position:absolute;left:1425px;top:197.5px;width:198px;height:261px;background:#fff;border:1px solid #a8bcd8;box-sizing:border-box"></div>
<div style="position:absolute;left:1426px;top:198.5px;width:182px;height:259px;overflow:hidden">
<div style="position:absolute;left:2.2px;top:2.5px;width:10px;height:10px;border:1.2px solid #2a2a2a;box-sizing:border-box;background:#fff"></div>
<div style="position:absolute;left:14px;top:3.71px;font-size:9.2px;line-height:9.2px;white-space:nowrap;color:#111;font-weight:normal">Año_Creación</div>
<div style="position:absolute;left:2.2px;top:18.25px;width:10px;height:10px;border:1.2px solid #2a2a2a;box-sizing:border-box;background:#fff"></div>
<div style="position:absolute;left:14px;top:19.46px;font-size:9.2px;line-height:9.2px;white-space:nowrap;color:#111;font-weight:normal">Calificación</div>
<div style="position:absolute;left:2.2px;top:34px;width:10px;height:10px;border:1.2px solid #2a2a2a;box-sizing:border-box;background:#fff"></div>
<div style="position:absolute;left:14px;top:35.21px;font-size:9.2px;line-height:9.2px;white-space:nowrap;color:#111;font-weight:normal">Clasifico_propietario</div>
<div style="position:absolute;left:2.2px;top:49.75px;width:10px;height:10px;border:1.2px solid #2a2a2a;box-sizing:border-box;background:#fff"></div>
<div style="position:absolute;left:14px;top:50.96px;font-size:9.2px;line-height:9.2px;white-space:nowrap;color:#111;font-weight:normal">Código_CNAE</div>
<div style="position:absolute;left:2.2px;top:65.5px;width:10px;height:10px;border:1.2px solid #2a2a2a;box-sizing:border-box;background:#fff"></div>
<div style="position:absolute;left:14px;top:66.71px;font-size:9.2px;line-height:9.2px;white-space:nowrap;color:#111;font-weight:normal">Código_Postal</div>
<div style="position:absolute;left:2.2px;top:81.25px;width:10px;height:10px;border:1.2px solid #2a2a2a;box-sizing:border-box;background:#fff"></div>
<div style="position:absolute;left:14px;top:82.46px;font-size:9.2px;line-height:9.2px;white-space:nowrap;color:#111;font-weight:normal">Dirección</div>
<div style="position:absolute;left:2.2px;top:97px;width:10px;height:10px;border:1.2px solid #2a2a2a;box-sizing:border-box;background:#fff"></div>
<div style="position:absolute;left:14px;top:98.21px;font-size:9.2px;line-height:9.2px;white-space:nowrap;color:#111;font-weight:normal">Dirección2</div>
<div style="position:absolute;left:2.2px;top:112.75px;width:10px;height:10px;border:1.2px solid #2a2a2a;box-sizing:border-box;background:#fff"></div>
<svg style="position:absolute;left:4px;top:114.55px" width="6.5" height="6.5" viewBox="0 0 6.5 6.5"><path d="M0.8 3 L2.6 5 L5.8 1" stroke="#111" stroke-width="1.4" fill="none"/></svg>
<div style="position:absolute;left:14px;top:113.96px;font-size:9.2px;line-height:9.2px;white-space:nowrap;color:#111;font-weight:bold">Email_Contacto</div>
<div style="position:absolute;left:2.2px;top:128.5px;width:10px;height:10px;border:1.2px solid #2a2a2a;box-sizing:border-box;background:#fff"></div>
<div style="position:absolute;left:14px;top:129.71px;font-size:9.2px;line-height:9.2px;white-space:nowrap;color:#111;font-weight:normal">Email_Empresa</div>
<div style="position:absolute;left:2.2px;top:144.25px;width:10px;height:10px;border:1.2px solid #2a2a2a;box-sizing:border-box;background:#fff"></div>
<svg style="position:absolute;left:4px;top:146.05px" width="6.5" height="6.5" viewBox="0 0 6.5 6.5"><path d="M0.8 3 L2.6 5 L5.8 1" stroke="#111" stroke-width="1.4" fill="none"/></svg>
<div style="position:absolute;left:14px;top:145.46px;font-size:9.2px;line-height:9.2px;white-space:nowrap;color:#111;font-weight:bold">Estado</div>
<div style="position:absolute;left:2.2px;top:160px;width:10px;height:10px;border:1.2px solid #2a2a2a;box-sizing:border-box;background:#fff"></div>
<div style="position:absolute;left:14px;top:161.21px;font-size:9.2px;line-height:9.2px;white-space:nowrap;color:#111;font-weight:normal">Extensión</div>
<div style="position:absolute;left:2.2px;top:175.75px;width:10px;height:10px;border:1.2px solid #2a2a2a;box-sizing:border-box;background:#fff"></div>
<svg style="position:absolute;left:4px;top:177.55px" width="6.5" height="6.5" viewBox="0 0 6.5 6.5"><path d="M0.8 3 L2.6 5 L5.8 1" stroke="#111" stroke-width="1.4" fill="none"/></svg>
<div style="position:absolute;left:14px;top:176.96px;font-size:9.2px;line-height:9.2px;white-space:nowrap;color:#111;font-weight:bold">Fase_Cualificación</div>
<div style="position:absolute;left:2.2px;top:191.5px;width:10px;height:10px;border:1.2px solid #2a2a2a;box-sizing:border-box;background:#fff"></div>
<div style="position:absolute;left:14px;top:192.71px;font-size:9.2px;line-height:9.2px;white-space:nowrap;color:#111;font-weight:normal">Fax</div>
<div style="position:absolute;left:2.2px;top:207.25px;width:10px;height:10px;border:1.2px solid #2a2a2a;box-sizing:border-box;background:#fff"></div>
<div style="position:absolute;left:14px;top:208.46px;font-size:9.2px;line-height:9.2px;white-space:nowrap;color:#111;font-weight:normal">Fecha_Creación</div>
<div style="position:absolute;left:2.2px;top:223px;width:10px;height:10px;border:1.2px solid #2a2a2a;box-sizing:border-box;background:#fff"></div>
<div style="position:absolute;left:14px;top:224.21px;font-size:9.2px;line-height:9.2px;white-space:nowrap;color:#111;font-weight:normal">Fecha_Modificación</div>
<div style="position:absolute;left:2.2px;top:238.75px;width:10px;height:10px;border:1.2px solid #2a2a2a;box-sizing:border-box;background:#fff"></div>
<div style="position:absolute;left:14px;top:239.96px;font-size:9.2px;line-height:9.2px;white-space:nowrap;color:#111;font-weight:normal">Forma_Contacto</div>
<div style="position:absolute;left:2.2px;top:254.5px;width:10px;height:10px;border:1.2px solid #2a2a2a;box-sizing:border-box;background:#fff"></div>
<div style="position:absolute;left:14px;top:255.71px;font-size:9.2px;line-height:9.2px;white-space:nowrap;color:#111;font-weight:normal">Frecuencia</div>
</div>
<svg style="position:absolute;left:1595.5px;top:343px;" width="11" height="10" viewBox="0 0 11 10"><path d="M0.5 0.5 H10.5 L6.5 5 V9.5 L4.5 8.3 V5 Z" fill="#fff" stroke="#333" stroke-width="1.1"/></svg>
<div style="position:absolute;left:1608.4px;top:198.5px;width:13.6px;height:259px;background:repeating-linear-gradient(45deg,#f3f2ee 0 1px,#fbfbf9 1px 2px)"></div>
<div style="position:absolute;left:1608.4px;top:199.6px;width:13.6px;height:13px;background:#d6d3cc;border-style:solid;border-width:1px;border-color:#f4f3ef #6f6d68 #6f6d68 #f4f3ef;box-sizing:border-box;border-width:1px 2px 2px 1px;"></div>
<svg style="position:absolute;left:1611.5px;top:203px;" width="8" height="5" viewBox="0 0 8 5"><path d="M0 4.5 L8 4.5 L4 0 Z" fill="#000"/></svg>
<div style="position:absolute;left:1608.4px;top:213.2px;width:13.6px;height:83.4px;background:#d6d3cc;border-style:solid;border-width:1px;border-color:#f4f3ef #6f6d68 #6f6d68 #f4f3ef;box-sizing:border-box;border-width:1px 2px 2px 1px;"></div>
<div style="position:absolute;left:1608.4px;top:443.5px;width:13.6px;height:14px;background:#d6d3cc;border-style:solid;border-width:1px;border-color:#f4f3ef #6f6d68 #6f6d68 #f4f3ef;box-sizing:border-box;border-width:1px 2px 2px 1px;"></div>
<svg style="position:absolute;left:1611.5px;top:448px;" width="8" height="5" viewBox="0 0 8 5"><path d="M0 0 L8 0 L4 4.5 Z" fill="#000"/></svg>
<div style="position:absolute;left:1419.5px;top:464.5px;width:204.5px;height:1px;background:#c2d3ea"></div>
<div style="position:absolute;left:1419.5px;top:465.5px;width:204.5px;height:1px;background:#f2f6fc"></div>
<div style="position:absolute;top:476.91px;font-size:9.2px;line-height:9.2px;color:#111;font-weight:normal;white-space:nowrap;left:1425.7px;">Arrastrar campos entre las áreas siguientes:</div>
<svg style="position:absolute;left:1426px;top:490.5px;" width="12" height="11" viewBox="0 0 12 11"><path d="M0.5 0.5 H11.5 L7 5.5 V10.5 L5 9.2 V5.5 Z" fill="#fff" stroke="#333" stroke-width="1.1"/></svg>
<div style="position:absolute;top:491.51px;font-size:9.2px;line-height:9.2px;color:#111;font-weight:normal;white-space:nowrap;left:1447.7px;">Filtro de informe</div>
<svg style="position:absolute;left:1528px;top:491px;" width="15" height="11" viewBox="0 0 15 11"><rect x="0.5" y="0.5" width="2.8" height="2.4" fill="#f1d7a3" stroke="#8d9bb8" stroke-width="0.5"/><rect x="3.3" y="0.5" width="2.8" height="2.4" fill="#f1d7a3" stroke="#8d9bb8" stroke-width="0.5"/><rect x="6.1" y="0.5" width="2.8" height="2.4" fill="#f1d7a3" stroke="#8d9bb8" stroke-width="0.5"/><rect x="8.899999999999999" y="0.5" width="2.8" height="2.4" fill="#f1d7a3" stroke="#8d9bb8" stroke-width="0.5"/><rect x="11.7" y="0.5" width="2.8" height="2.4" fill="#f1d7a3" stroke="#8d9bb8" stroke-width="0.5"/><rect x="0.5" y="2.9" width="2.8" height="2.4" fill="#f1d7a3" stroke="#8d9bb8" stroke-width="0.5"/><rect x="3.3" y="2.9" width="2.8" height="2.4" fill="#f7f9fd" stroke="#8d9bb8" stroke-width="0.5"/><rect x="6.1" y="2.9" width="2.8" height="2.4" fill="#f7f9fd" stroke="#8d9bb8" stroke-width="0.5"/><rect x="8.899999999999999" y="2.9" width="2.8" height="2.4" fill="#f7f9fd" stroke="#8d9bb8" stroke-width="0.5"/><rect x="11.7" y="2.9" width="2.8" height="2.4" fill="#f7f9fd" stroke="#8d9bb8" stroke-width="0.5"/><rect x="0.5" y="5.3" width="2.8" height="2.4" fill="#f1d7a3" stroke="#8d9bb8" stroke-width="0.5"/><rect x="3.3" y="5.3" width="2.8" height="2.4" fill="#f7f9fd" stroke="#8d9bb8" stroke-width="0.5"/><rect x="6.1" y="5.3" width="2.8" height="2.4" fill="#f7f9fd" stroke="#8d9bb8" stroke-width="0.5"/><rect x="8.899999999999999" y="5.3" width="2.8" height="2.4" fill="#f7f9fd" stroke="#8d9bb8" stroke-width="0.5"/><rect x="11.7" y="5.3" width="2.8" height="2.4" fill="#f7f9fd" stroke="#8d9bb8" stroke-width="0.5"/><rect x="0.5" y="7.699999999999999" width="2.8" height="2.4" fill="#f1d7a3" stroke="#8d9bb8" stroke-width="0.5"/><rect x="3.3" y="7.699999999999999" width="2.8" height="2.4" fill="#f7f9fd" stroke="#8d9bb8" stroke-width="0.5"/><rect x="6.1" y="7.699999999999999" width="2.8" height="2.4" fill="#f7f9fd" stroke="#8d9bb8" stroke-width="0.5"/><rect x="8.899999999999999" y="7.699999999999999" width="2.8" height="2.4" fill="#f7f9fd" stroke="#8d9bb8" stroke-width="0.5"/><rect x="11.7" y="7.699999999999999" width="2.8" height="2.4" fill="#f7f9fd" stroke="#8d9bb8" stroke-width="0.5"/></svg>
<div style="position:absolute;top:491.51px;font-size:9.2px;line-height:9.2px;color:#111;font-weight:normal;white-space:nowrap;left:1550.3px;">Rótulos de col...</div>
<div style="position:absolute;left:1425.7px;top:506.5px;width:94.6px;height:93.5px;background:#fff;border:1px solid #a8bcd8;box-sizing:border-box"></div>
<div style="position:absolute;left:1528.3px;top:506.5px;width:95.7px;height:93.5px;background:#fff;border:1px solid #a8bcd8;border-right:none;box-sizing:border-box"></div>
<div style="position:absolute;left:1427.5px;top:508px;width:91px;height:14.5px;background:linear-gradient(#fff7e6 0%,#feecc4 45%,#fde2ab 60%,#fef0d2 100%);border:1px solid #f3d9a6;border-radius:1px;box-sizing:border-box"></div>
<div style="position:absolute;top:511.51px;font-size:9.2px;line-height:9.2px;color:#000;font-weight:normal;white-space:nowrap;left:1432px;">Propietario</div>
<svg style="position:absolute;left:1503.8px;top:512.75px;" width="7" height="5" viewBox="0 0 7 5"><path d="M0 0.5 L7 0.5 L3.5 4.5 Z" fill="#000"/></svg>
<div style="position:absolute;left:1427.5px;top:524px;width:91px;height:14.7px;background:linear-gradient(#fff7e6 0%,#feecc4 45%,#fde2ab 60%,#fef0d2 100%);border:1px solid #f3d9a6;border-radius:1px;box-sizing:border-box"></div>
<div style="position:absolute;top:527.71px;font-size:9.2px;line-height:9.2px;color:#000;font-weight:normal;white-space:nowrap;left:1432px;">Estado</div>
<svg style="position:absolute;left:1503.8px;top:528.85px;" width="7" height="5" viewBox="0 0 7 5"><path d="M0 0.5 L7 0.5 L3.5 4.5 Z" fill="#000"/></svg>
<div style="position:absolute;left:1529.5px;top:508px;width:92px;height:14.5px;background:linear-gradient(#fff7e6 0%,#feecc4 45%,#fde2ab 60%,#fef0d2 100%);border:1px solid #f3d9a6;border-radius:1px;box-sizing:border-box"></div>
<div style="position:absolute;top:511.51px;font-size:9.2px;line-height:9.2px;color:#000;font-weight:normal;white-space:nowrap;left:1534px;">Mes_Creación</div>
<svg style="position:absolute;left:1607px;top:512.75px;" width="7" height="5" viewBox="0 0 7 5"><path d="M0 0.5 L7 0.5 L3.5 4.5 Z" fill="#000"/></svg>
<svg style="position:absolute;left:1425.7px;top:605px;" width="15" height="11" viewBox="0 0 15 11"><rect x="0.5" y="0.5" width="2.8" height="2.4" fill="#f1d7a3" stroke="#8d9bb8" stroke-width="0.5"/><rect x="3.3" y="0.5" width="2.8" height="2.4" fill="#f1d7a3" stroke="#8d9bb8" stroke-width="0.5"/><rect x="6.1" y="0.5" width="2.8" height="2.4" fill="#f1d7a3" stroke="#8d9bb8" stroke-width="0.5"/><rect x="8.899999999999999" y="0.5" width="2.8" height="2.4" fill="#f1d7a3" stroke="#8d9bb8" stroke-width="0.5"/><rect x="11.7" y="0.5" width="2.8" height="2.4" fill="#f1d7a3" stroke="#8d9bb8" stroke-width="0.5"/><rect x="0.5" y="2.9" width="2.8" height="2.4" fill="#f1d7a3" stroke="#8d9bb8" stroke-width="0.5"/><rect x="3.3" y="2.9" width="2.8" height="2.4" fill="#f7f9fd" stroke="#8d9bb8" stroke-width="0.5"/><rect x="6.1" y="2.9" width="2.8" height="2.4" fill="#f7f9fd" stroke="#8d9bb8" stroke-width="0.5"/><rect x="8.899999999999999" y="2.9" width="2.8" height="2.4" fill="#f7f9fd" stroke="#8d9bb8" stroke-width="0.5"/><rect x="11.7" y="2.9" width="2.8" height="2.4" fill="#f7f9fd" stroke="#8d9bb8" stroke-width="0.5"/><rect x="0.5" y="5.3" width="2.8" height="2.4" fill="#f1d7a3" stroke="#8d9bb8" stroke-width="0.5"/><rect x="3.3" y="5.3" width="2.8" height="2.4" fill="#f7f9fd" stroke="#8d9bb8" stroke-width="0.5"/><rect x="6.1" y="5.3" width="2.8" height="2.4" fill="#f7f9fd" stroke="#8d9bb8" stroke-width="0.5"/><rect x="8.899999999999999" y="5.3" width="2.8" height="2.4" fill="#f7f9fd" stroke="#8d9bb8" stroke-width="0.5"/><rect x="11.7" y="5.3" width="2.8" height="2.4" fill="#f7f9fd" stroke="#8d9bb8" stroke-width="0.5"/><rect x="0.5" y="7.699999999999999" width="2.8" height="2.4" fill="#f1d7a3" stroke="#8d9bb8" stroke-width="0.5"/><rect x="3.3" y="7.699999999999999" width="2.8" height="2.4" fill="#f7f9fd" stroke="#8d9bb8" stroke-width="0.5"/><rect x="6.1" y="7.699999999999999" width="2.8" height="2.4" fill="#f7f9fd" stroke="#8d9bb8" stroke-width="0.5"/><rect x="8.899999999999999" y="7.699999999999999" width="2.8" height="2.4" fill="#f7f9fd" stroke="#8d9bb8" stroke-width="0.5"/><rect x="11.7" y="7.699999999999999" width="2.8" height="2.4" fill="#f7f9fd" stroke="#8d9bb8" stroke-width="0.5"/></svg>
<div style="position:absolute;top:605.71px;font-size:9.2px;line-height:9.2px;color:#111;font-weight:normal;white-space:nowrap;left:1447px;">Rótulos de fila</div>
<div style="position:absolute;top:604.77px;font-size:11.5px;line-height:11.5px;color:#111;font-weight:bold;white-space:nowrap;left:1531px;">Σ</div>
<div style="position:absolute;top:605.71px;font-size:9.2px;line-height:9.2px;color:#111;font-weight:normal;white-space:nowrap;left:1550.5px;">Valores</div>
<div style="position:absolute;left:1425.2px;top:621px;width:94.8px;height:92.5px;background:#fff;border:1px solid #7a8799;box-sizing:border-box"></div>
<div style="position:absolute;left:1528.1px;top:621px;width:95.9px;height:92.5px;background:#fff;border:1px solid #a8bcd8;border-right:none;box-sizing:border-box"></div>
<div style="position:absolute;left:1426.2px;top:622px;width:80px;height:90.5px;overflow:hidden">
<div style="position:absolute;left:0.5px;top:0.4px;width:77.5px;height:13.6px;background:linear-gradient(#fff7e6 0%,#feecc4 45%,#fde2ab 60%,#fef0d2 100%);border:1px solid #f3d9a6;box-sizing:border-box"></div>
<div style="position:absolute;left:5px;top:3.01px;font-size:9.2px;line-height:9.2px;white-space:nowrap;color:#000">Nombre_C...</div>
<svg style="position:absolute;left:63.5px;top:4.7px" width="7" height="5" viewBox="0 0 7 5"><path d="M0 0.5 L7 0.5 L3.5 4.5 Z" fill="#000"/></svg>
<div style="position:absolute;left:0.5px;top:16.25px;width:77.5px;height:13.6px;background:linear-gradient(#fff7e6 0%,#feecc4 45%,#fde2ab 60%,#fef0d2 100%);border:1px solid #f3d9a6;box-sizing:border-box"></div>
<div style="position:absolute;left:5px;top:18.86px;font-size:9.2px;line-height:9.2px;white-space:nowrap;color:#000">Tema</div>
<svg style="position:absolute;left:63.5px;top:20.55px" width="7" height="5" viewBox="0 0 7 5"><path d="M0 0.5 L7 0.5 L3.5 4.5 Z" fill="#000"/></svg>
<div style="position:absolute;left:0.5px;top:32.1px;width:77.5px;height:13.6px;background:linear-gradient(#fff7e6 0%,#feecc4 45%,#fde2ab 60%,#fef0d2 100%);border:1px solid #f3d9a6;box-sizing:border-box"></div>
<div style="position:absolute;left:5px;top:34.71px;font-size:9.2px;line-height:9.2px;white-space:nowrap;color:#000">Nombre_E...</div>
<svg style="position:absolute;left:63.5px;top:36.4px" width="7" height="5" viewBox="0 0 7 5"><path d="M0 0.5 L7 0.5 L3.5 4.5 Z" fill="#000"/></svg>
<div style="position:absolute;left:0.5px;top:47.95px;width:77.5px;height:13.6px;background:linear-gradient(#fff7e6 0%,#feecc4 45%,#fde2ab 60%,#fef0d2 100%);border:1px solid #f3d9a6;box-sizing:border-box"></div>
<div style="position:absolute;left:5px;top:50.56px;font-size:9.2px;line-height:9.2px;white-space:nowrap;color:#000">Nivel_Inte...</div>
<svg style="position:absolute;left:63.5px;top:52.25px" width="7" height="5" viewBox="0 0 7 5"><path d="M0 0.5 L7 0.5 L3.5 4.5 Z" fill="#000"/></svg>
<div style="position:absolute;left:0.5px;top:63.8px;width:77.5px;height:13.6px;background:linear-gradient(#fff7e6 0%,#feecc4 45%,#fde2ab 60%,#fef0d2 100%);border:1px solid #f3d9a6;box-sizing:border-box"></div>
<div style="position:absolute;left:5px;top:66.41px;font-size:9.2px;line-height:9.2px;white-space:nowrap;color:#000">Fase_Cual...</div>
<svg style="position:absolute;left:63.5px;top:68.1px" width="7" height="5" viewBox="0 0 7 5"><path d="M0 0.5 L7 0.5 L3.5 4.5 Z" fill="#000"/></svg>
<div style="position:absolute;left:0.5px;top:79.65px;width:77.5px;height:13.6px;background:linear-gradient(#fff7e6 0%,#feecc4 45%,#fde2ab 60%,#fef0d2 100%);border:1px solid #f3d9a6;box-sizing:border-box"></div>
<div style="position:absolute;left:5px;top:82.26px;font-size:9.2px;line-height:9.2px;white-space:nowrap;color:#000">Teléfono</div>
<svg style="position:absolute;left:63.5px;top:83.95px" width="7" height="5" viewBox="0 0 7 5"><path d="M0 0.5 L7 0.5 L3.5 4.5 Z" fill="#000"/></svg>
</div>
<div style="position:absolute;left:1506.3px;top:622px;width:12.7px;height:90.5px;background:repeating-linear-gradient(45deg,#f3f2ee 0 1px,#fbfbf9 1px 2px)"></div>
<div style="position:absolute;left:1506.3px;top:622px;width:12.7px;height:14px;background:#d6d3cc;border-style:solid;border-width:1px;border-color:#f4f3ef #6f6d68 #6f6d68 #f4f3ef;box-sizing:border-box;border-width:1px 2px 2px 1px;"></div>
<svg style="position:absolute;left:1509px;top:626.5px;" width="8" height="5" viewBox="0 0 8 5"><path d="M0 4.5 L8 4.5 L4 0 Z" fill="#000"/></svg>
<div style="position:absolute;left:1506.3px;top:636.5px;width:12.7px;height:51px;background:#d6d3cc;border-style:solid;border-width:1px;border-color:#f4f3ef #6f6d68 #6f6d68 #f4f3ef;box-sizing:border-box;border-width:1px 2px 2px 1px;"></div>
<div style="position:absolute;left:1506.3px;top:699.5px;width:12.7px;height:13px;background:#d6d3cc;border-style:solid;border-width:1px;border-color:#f4f3ef #6f6d68 #6f6d68 #f4f3ef;box-sizing:border-box;border-width:1px 2px 2px 1px;"></div>
<svg style="position:absolute;left:1509px;top:704px;" width="8" height="5" viewBox="0 0 8 5"><path d="M0 0 L8 0 L4 4.5 Z" fill="#000"/></svg>
<div style="position:absolute;left:1529.5px;top:622.4px;width:92.5px;height:13.6px;background:linear-gradient(#fff7e6 0%,#feecc4 45%,#fde2ab 60%,#fef0d2 100%);border:1px solid #f3d9a6;border-radius:1px;box-sizing:border-box"></div>
<div style="position:absolute;top:625.01px;font-size:9.2px;line-height:9.2px;color:#000;font-weight:normal;white-space:nowrap;left:1534px;">Cuenta de Id...</div>
<svg style="position:absolute;left:1607px;top:626.7px;" width="7" height="5" viewBox="0 0 7 5"><path d="M0 0.5 L7 0.5 L3.5 4.5 Z" fill="#000"/></svg>
<div style="position:absolute;left:1426.7px;top:722.3px;width:9px;height:9px;border:1px solid #8d97a6;box-sizing:border-box;background:#fbfcfd"></div>
<div style="position:absolute;top:722.01px;font-size:9.2px;line-height:9.2px;color:#111;font-weight:normal;white-space:nowrap;left:1442.7px;">Aplazar actualización d...</div>
<div style="position:absolute;left:1559.7px;top:717.6px;width:64.3px;height:18.6px;background:#d7d5cf;border:1px solid #c3c1ba;border-right:none;box-sizing:border-box"></div>
<div style="position:absolute;top:722.21px;font-size:9.2px;line-height:9.2px;color:#a7a7a7;font-weight:normal;white-space:nowrap;left:1568.5px;">Actualizar</div>
<div style="position:absolute;left:240px;top:730.8px;width:1164.5px;height:13.2px;background:linear-gradient(#a3bde2,#90acd6)"></div>
<div style="position:absolute;left:240px;top:730.8px;width:1164.5px;height:1px;background:#7c98c6"></div>
<div style="position:absolute;left:240px;top:731.5px;width:51.4px;height:12.2px;background:linear-gradient(#edf3fb,#d5e2f3);border:1px solid #b3c6e0;box-sizing:border-box"></div>
<svg style="position:absolute;left:243.5px;top:734.5px;" width="7" height="7" viewBox="0 0 7 7"><rect x="0" y="0" width="1.6" height="6.5" fill="#1f3a75"/><path d="M6.5 0 L2 3.25 L6.5 6.5 Z" fill="#1f3a75"/></svg>
<svg style="position:absolute;left:257px;top:734.5px;" width="5" height="7" viewBox="0 0 5 7"><path d="M4.5 0 L0.5 3.25 L4.5 6.5 Z" fill="#1f3a75"/></svg>
<svg style="position:absolute;left:268px;top:734.5px;" width="5" height="7" viewBox="0 0 5 7"><path d="M0.5 0 L4.5 3.25 L0.5 6.5 Z" fill="#1f3a75"/></svg>
<svg style="position:absolute;left:279.5px;top:734.5px;" width="7" height="7" viewBox="0 0 7 7"><path d="M0 0 L4.5 3.25 L0 6.5 Z" fill="#1f3a75"/><rect x="5" y="0" width="1.6" height="6.5" fill="#1f3a75"/></svg>
<svg style="position:absolute;left:291.4px;top:731px" width="95" height="13" viewBox="0 0 95 13"><path d="M0 0 H65 L55.6 12.5 H0 Z" fill="#ffffff"/><path d="M55.6 0 H92 L82.6 12.5 H46.2 Z" fill="#c6d6ee"/><path d="M65 0.3 L55.6 12.5" stroke="#8aa0c4" stroke-width="1"/><path d="M91.8 0.3 L82.4 12.5" stroke="#8aa0c4" stroke-width="1"/><path d="M55.6 12.5 H92" stroke="#8aa0c4" stroke-width="1"/></svg>
<div style="position:absolute;top:733.4px;font-size:10.4px;line-height:10.4px;color:#1b2f5e;font-weight:bold;white-space:nowrap;left:299px;">contacto</div>
<svg style="position:absolute;left:358.5px;top:732.5px;" width="13" height="10" viewBox="0 0 13 10"><rect x="3" y="2.5" width="8.5" height="6.5" fill="#f3f6fb" stroke="#5a6b88" stroke-width="0.8"/><circle cx="3.3" cy="2.8" r="2.4" fill="#f7a42b"/><circle cx="3.3" cy="2.8" r="1.1" fill="#fde6a8"/></svg>
<div style="position:absolute;left:1404.5px;top:730.8px;width:13.5px;height:12.7px;background:#84a3d3;border-left:1px solid #6c8cbf;box-sizing:border-box"></div>
<div style="position:absolute;left:1394.6px;top:732.2px;width:8.9px;height:11.2px;background:linear-gradient(90deg,#fff,#dfe6f1);border:1px solid #8ba2c6;box-sizing:border-box"></div>
<div style="position:absolute;left:1397.5px;top:734px;width:1px;height:8px;background:#8ba2c6"></div>
<div style="position:absolute;left:1400.5px;top:734px;width:1px;height:8px;background:#8ba2c6"></div>
<div style="position:absolute;left:235px;top:743.4px;width:1389px;height:6.6px;background:linear-gradient(#c9daf0,#bcd0eb)"></div>
<div style="position:absolute;left:235px;top:743.4px;width:1389px;height:1px;background:#8ea8cc"></div>
<div style="position:absolute;left:1421.6px;top:745px;width:48.6px;height:6px;background:linear-gradient(#e8eef7,#cdd9ea);border:1px solid #8b9cb6;border-radius:2px;box-sizing:border-box"></div>
<div style="position:absolute;left:1422.6px;top:746px;width:15.4px;height:5px;background:linear-gradient(#fbe3b0,#f3c77e)"></div>
<div style="position:absolute;left:1438px;top:746px;width:1px;height:5px;background:#a7b4c8"></div>
<div style="position:absolute;left:1454px;top:746px;width:1px;height:5px;background:#a7b4c8"></div>
<div style="position:absolute;left:1505px;top:745px;width:12px;height:12px;border-radius:6px;border:1px solid #6d7f9c;box-sizing:border-box;background:#e6edf7"></div>
<div style="position:absolute;left:1562px;top:745px;width:6px;height:6px;border:1px solid #6d7f9c;box-sizing:border-box;background:#eef2f8"></div>
<div style="position:absolute;left:1610px;top:745px;width:12px;height:12px;border-radius:6px;border:1px solid #6d7f9c;box-sizing:border-box;background:#e6edf7"></div>
</div></body></html>
